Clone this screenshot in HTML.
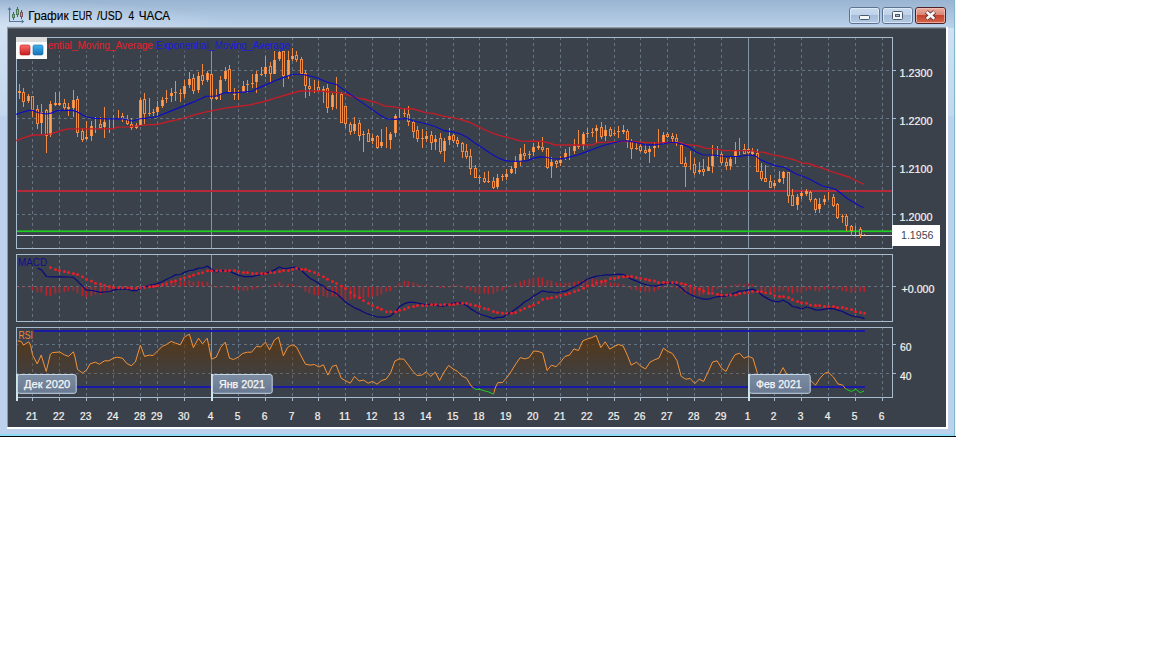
<!DOCTYPE html>
<html lang="ru"><head><meta charset="utf-8"><title>График EUR /USD 4 ЧАСА</title>
<style>
html,body{margin:0;padding:0;background:#fff;}
body{width:1152px;height:648px;overflow:hidden;position:relative;font-family:"Liberation Sans",sans-serif;}
svg{position:absolute;left:0;top:0;display:block;}
text{font-family:"Liberation Sans",sans-serif;}
.ax{font-size:11px;fill:#f2f2ee;stroke:#f2f2ee;stroke-width:0.22px;}
</style></head><body>
<svg width="1152" height="648" viewBox="0 0 1152 648">
<defs>
<radialGradient id="tg" cx="0" cy="1" r="1" fx="0" fy="1"><stop offset="0" stop-color="#dce8f6" stop-opacity="0.75"/><stop offset="0.45" stop-color="#dce8f6" stop-opacity="0.4"/><stop offset="1" stop-color="#dce8f6" stop-opacity="0"/></radialGradient>
<linearGradient id="sg" x1="0" y1="0" x2="0" y2="1"><stop offset="0" stop-color="#ffffff" stop-opacity="0.32"/><stop offset="1" stop-color="#ffffff" stop-opacity="0.12"/></linearGradient>
<linearGradient id="tb" x1="0" y1="0" x2="0" y2="1"><stop offset="0" stop-color="#99b4d1"/><stop offset="1" stop-color="#bad1ea"/></linearGradient>
<linearGradient id="rgu" x1="0" y1="328" x2="0" y2="386" gradientUnits="userSpaceOnUse"><stop offset="0" stop-color="#5e3406" stop-opacity="0.9"/><stop offset="0.5" stop-color="#5c3408" stop-opacity="0.45"/><stop offset="1" stop-color="#5a3408" stop-opacity="0"/></linearGradient>
<linearGradient id="bt" x1="0" y1="0" x2="0" y2="1"><stop offset="0" stop-color="#c9dbee"/><stop offset="0.48" stop-color="#bed2e9"/><stop offset="0.5" stop-color="#a6bdd9"/><stop offset="1" stop-color="#b4cae3"/></linearGradient>
<linearGradient id="bc" x1="0" y1="0" x2="0" y2="1"><stop offset="0" stop-color="#eab0a2"/><stop offset="0.48" stop-color="#d98472"/><stop offset="0.5" stop-color="#c6432c"/><stop offset="1" stop-color="#d4694c"/></linearGradient>
<linearGradient id="lr" x1="0" y1="0" x2="0" y2="1"><stop offset="0" stop-color="#ff6a6a"/><stop offset="1" stop-color="#c41c1c"/></linearGradient>
<linearGradient id="lb" x1="0" y1="0" x2="0" y2="1"><stop offset="0" stop-color="#3fb4ee"/><stop offset="1" stop-color="#1670b8"/></linearGradient>
<linearGradient id="ml" x1="0" y1="0" x2="0" y2="1"><stop offset="0" stop-color="#7b8ca3"/><stop offset="1" stop-color="#687991"/></linearGradient>
</defs>
<rect x="0" y="0" width="1152" height="648" fill="#ffffff"/>
<!-- window frame -->
<g shape-rendering="crispEdges">
<rect x="0" y="0" width="956" height="437" fill="#bcd2ec"/>
<rect x="0" y="0" width="956" height="28" fill="url(#tb)"/>
<rect x="0" y="0" width="240" height="28" fill="url(#tg)"/>
<rect x="0" y="28" width="7" height="88" fill="url(#sg)"/>
<rect x="948" y="28" width="6" height="88" fill="url(#sg)"/>
<rect x="0" y="434" width="956" height="2" fill="#8cdcf6"/>
<rect x="0" y="436" width="956" height="1" fill="#05080c"/>
<rect x="954" y="0" width="1" height="436" fill="#7fb6cc"/>
<rect x="955" y="0" width="1" height="436" fill="#dcfcff"/>
<rect x="7" y="27" width="941" height="402" fill="#ffffff"/>
<rect x="7" y="27" width="939" height="400" fill="#8e96a0"/>
<rect x="7" y="26" width="941" height="1" fill="#c3d5e8"/>
<rect x="8" y="29" width="938" height="398" fill="#3b414b"/>
<rect x="8" y="28" width="938" height="1" fill="#5c626b"/>
</g>
<g shape-rendering="crispEdges">
<line x1="32.5" y1="37" x2="32.5" y2="248" stroke="#667381" stroke-width="1" stroke-dasharray="3 3"/>
<line x1="59.5" y1="37" x2="59.5" y2="248" stroke="#667381" stroke-width="1" stroke-dasharray="3 3"/>
<line x1="86.5" y1="37" x2="86.5" y2="248" stroke="#667381" stroke-width="1" stroke-dasharray="3 3"/>
<line x1="113.5" y1="37" x2="113.5" y2="248" stroke="#667381" stroke-width="1" stroke-dasharray="3 3"/>
<line x1="140.5" y1="37" x2="140.5" y2="248" stroke="#667381" stroke-width="1" stroke-dasharray="3 3"/>
<line x1="157.5" y1="37" x2="157.5" y2="248" stroke="#667381" stroke-width="1" stroke-dasharray="3 3"/>
<line x1="184.5" y1="37" x2="184.5" y2="248" stroke="#667381" stroke-width="1" stroke-dasharray="3 3"/>
<rect x="211" y="38" width="1" height="210" fill="#8296aa"/>
<line x1="238.5" y1="37" x2="238.5" y2="248" stroke="#667381" stroke-width="1" stroke-dasharray="3 3"/>
<line x1="265.5" y1="37" x2="265.5" y2="248" stroke="#667381" stroke-width="1" stroke-dasharray="3 3"/>
<line x1="292.5" y1="37" x2="292.5" y2="248" stroke="#667381" stroke-width="1" stroke-dasharray="3 3"/>
<line x1="318.5" y1="37" x2="318.5" y2="248" stroke="#667381" stroke-width="1" stroke-dasharray="3 3"/>
<line x1="345.5" y1="37" x2="345.5" y2="248" stroke="#667381" stroke-width="1" stroke-dasharray="3 3"/>
<line x1="372.5" y1="37" x2="372.5" y2="248" stroke="#667381" stroke-width="1" stroke-dasharray="3 3"/>
<line x1="399.5" y1="37" x2="399.5" y2="248" stroke="#667381" stroke-width="1" stroke-dasharray="3 3"/>
<line x1="426.5" y1="37" x2="426.5" y2="248" stroke="#667381" stroke-width="1" stroke-dasharray="3 3"/>
<line x1="453.5" y1="37" x2="453.5" y2="248" stroke="#667381" stroke-width="1" stroke-dasharray="3 3"/>
<line x1="479.5" y1="37" x2="479.5" y2="248" stroke="#667381" stroke-width="1" stroke-dasharray="3 3"/>
<line x1="506.5" y1="37" x2="506.5" y2="248" stroke="#667381" stroke-width="1" stroke-dasharray="3 3"/>
<line x1="533.5" y1="37" x2="533.5" y2="248" stroke="#667381" stroke-width="1" stroke-dasharray="3 3"/>
<line x1="560.5" y1="37" x2="560.5" y2="248" stroke="#667381" stroke-width="1" stroke-dasharray="3 3"/>
<line x1="587.5" y1="37" x2="587.5" y2="248" stroke="#667381" stroke-width="1" stroke-dasharray="3 3"/>
<line x1="614.5" y1="37" x2="614.5" y2="248" stroke="#667381" stroke-width="1" stroke-dasharray="3 3"/>
<line x1="640.5" y1="37" x2="640.5" y2="248" stroke="#667381" stroke-width="1" stroke-dasharray="3 3"/>
<line x1="667.5" y1="37" x2="667.5" y2="248" stroke="#667381" stroke-width="1" stroke-dasharray="3 3"/>
<line x1="694.5" y1="37" x2="694.5" y2="248" stroke="#667381" stroke-width="1" stroke-dasharray="3 3"/>
<line x1="721.5" y1="37" x2="721.5" y2="248" stroke="#667381" stroke-width="1" stroke-dasharray="3 3"/>
<rect x="748" y="38" width="1" height="210" fill="#8296aa"/>
<line x1="774.5" y1="37" x2="774.5" y2="248" stroke="#667381" stroke-width="1" stroke-dasharray="3 3"/>
<line x1="801.5" y1="37" x2="801.5" y2="248" stroke="#667381" stroke-width="1" stroke-dasharray="3 3"/>
<line x1="828.5" y1="37" x2="828.5" y2="248" stroke="#667381" stroke-width="1" stroke-dasharray="3 3"/>
<line x1="855.5" y1="37" x2="855.5" y2="248" stroke="#667381" stroke-width="1" stroke-dasharray="3 3"/>
<line x1="882.5" y1="37" x2="882.5" y2="248" stroke="#667381" stroke-width="1" stroke-dasharray="3 3"/>
<line x1="32.5" y1="254" x2="32.5" y2="321" stroke="#667381" stroke-width="1" stroke-dasharray="3 3"/>
<line x1="59.5" y1="254" x2="59.5" y2="321" stroke="#667381" stroke-width="1" stroke-dasharray="3 3"/>
<line x1="86.5" y1="254" x2="86.5" y2="321" stroke="#667381" stroke-width="1" stroke-dasharray="3 3"/>
<line x1="113.5" y1="254" x2="113.5" y2="321" stroke="#667381" stroke-width="1" stroke-dasharray="3 3"/>
<line x1="140.5" y1="254" x2="140.5" y2="321" stroke="#667381" stroke-width="1" stroke-dasharray="3 3"/>
<line x1="157.5" y1="254" x2="157.5" y2="321" stroke="#667381" stroke-width="1" stroke-dasharray="3 3"/>
<line x1="184.5" y1="254" x2="184.5" y2="321" stroke="#667381" stroke-width="1" stroke-dasharray="3 3"/>
<rect x="211" y="255" width="1" height="66" fill="#8296aa"/>
<line x1="238.5" y1="254" x2="238.5" y2="321" stroke="#667381" stroke-width="1" stroke-dasharray="3 3"/>
<line x1="265.5" y1="254" x2="265.5" y2="321" stroke="#667381" stroke-width="1" stroke-dasharray="3 3"/>
<line x1="292.5" y1="254" x2="292.5" y2="321" stroke="#667381" stroke-width="1" stroke-dasharray="3 3"/>
<line x1="318.5" y1="254" x2="318.5" y2="321" stroke="#667381" stroke-width="1" stroke-dasharray="3 3"/>
<line x1="345.5" y1="254" x2="345.5" y2="321" stroke="#667381" stroke-width="1" stroke-dasharray="3 3"/>
<line x1="372.5" y1="254" x2="372.5" y2="321" stroke="#667381" stroke-width="1" stroke-dasharray="3 3"/>
<line x1="399.5" y1="254" x2="399.5" y2="321" stroke="#667381" stroke-width="1" stroke-dasharray="3 3"/>
<line x1="426.5" y1="254" x2="426.5" y2="321" stroke="#667381" stroke-width="1" stroke-dasharray="3 3"/>
<line x1="453.5" y1="254" x2="453.5" y2="321" stroke="#667381" stroke-width="1" stroke-dasharray="3 3"/>
<line x1="479.5" y1="254" x2="479.5" y2="321" stroke="#667381" stroke-width="1" stroke-dasharray="3 3"/>
<line x1="506.5" y1="254" x2="506.5" y2="321" stroke="#667381" stroke-width="1" stroke-dasharray="3 3"/>
<line x1="533.5" y1="254" x2="533.5" y2="321" stroke="#667381" stroke-width="1" stroke-dasharray="3 3"/>
<line x1="560.5" y1="254" x2="560.5" y2="321" stroke="#667381" stroke-width="1" stroke-dasharray="3 3"/>
<line x1="587.5" y1="254" x2="587.5" y2="321" stroke="#667381" stroke-width="1" stroke-dasharray="3 3"/>
<line x1="614.5" y1="254" x2="614.5" y2="321" stroke="#667381" stroke-width="1" stroke-dasharray="3 3"/>
<line x1="640.5" y1="254" x2="640.5" y2="321" stroke="#667381" stroke-width="1" stroke-dasharray="3 3"/>
<line x1="667.5" y1="254" x2="667.5" y2="321" stroke="#667381" stroke-width="1" stroke-dasharray="3 3"/>
<line x1="694.5" y1="254" x2="694.5" y2="321" stroke="#667381" stroke-width="1" stroke-dasharray="3 3"/>
<line x1="721.5" y1="254" x2="721.5" y2="321" stroke="#667381" stroke-width="1" stroke-dasharray="3 3"/>
<rect x="748" y="255" width="1" height="66" fill="#8296aa"/>
<line x1="774.5" y1="254" x2="774.5" y2="321" stroke="#667381" stroke-width="1" stroke-dasharray="3 3"/>
<line x1="801.5" y1="254" x2="801.5" y2="321" stroke="#667381" stroke-width="1" stroke-dasharray="3 3"/>
<line x1="828.5" y1="254" x2="828.5" y2="321" stroke="#667381" stroke-width="1" stroke-dasharray="3 3"/>
<line x1="855.5" y1="254" x2="855.5" y2="321" stroke="#667381" stroke-width="1" stroke-dasharray="3 3"/>
<line x1="882.5" y1="254" x2="882.5" y2="321" stroke="#667381" stroke-width="1" stroke-dasharray="3 3"/>
<line x1="32.5" y1="327" x2="32.5" y2="397" stroke="#667381" stroke-width="1" stroke-dasharray="3 3"/>
<line x1="59.5" y1="327" x2="59.5" y2="397" stroke="#667381" stroke-width="1" stroke-dasharray="3 3"/>
<line x1="86.5" y1="327" x2="86.5" y2="397" stroke="#667381" stroke-width="1" stroke-dasharray="3 3"/>
<line x1="113.5" y1="327" x2="113.5" y2="397" stroke="#667381" stroke-width="1" stroke-dasharray="3 3"/>
<line x1="140.5" y1="327" x2="140.5" y2="397" stroke="#667381" stroke-width="1" stroke-dasharray="3 3"/>
<line x1="157.5" y1="327" x2="157.5" y2="397" stroke="#667381" stroke-width="1" stroke-dasharray="3 3"/>
<line x1="184.5" y1="327" x2="184.5" y2="397" stroke="#667381" stroke-width="1" stroke-dasharray="3 3"/>
<rect x="211" y="328" width="1" height="69" fill="#8296aa"/>
<line x1="238.5" y1="327" x2="238.5" y2="397" stroke="#667381" stroke-width="1" stroke-dasharray="3 3"/>
<line x1="265.5" y1="327" x2="265.5" y2="397" stroke="#667381" stroke-width="1" stroke-dasharray="3 3"/>
<line x1="292.5" y1="327" x2="292.5" y2="397" stroke="#667381" stroke-width="1" stroke-dasharray="3 3"/>
<line x1="318.5" y1="327" x2="318.5" y2="397" stroke="#667381" stroke-width="1" stroke-dasharray="3 3"/>
<line x1="345.5" y1="327" x2="345.5" y2="397" stroke="#667381" stroke-width="1" stroke-dasharray="3 3"/>
<line x1="372.5" y1="327" x2="372.5" y2="397" stroke="#667381" stroke-width="1" stroke-dasharray="3 3"/>
<line x1="399.5" y1="327" x2="399.5" y2="397" stroke="#667381" stroke-width="1" stroke-dasharray="3 3"/>
<line x1="426.5" y1="327" x2="426.5" y2="397" stroke="#667381" stroke-width="1" stroke-dasharray="3 3"/>
<line x1="453.5" y1="327" x2="453.5" y2="397" stroke="#667381" stroke-width="1" stroke-dasharray="3 3"/>
<line x1="479.5" y1="327" x2="479.5" y2="397" stroke="#667381" stroke-width="1" stroke-dasharray="3 3"/>
<line x1="506.5" y1="327" x2="506.5" y2="397" stroke="#667381" stroke-width="1" stroke-dasharray="3 3"/>
<line x1="533.5" y1="327" x2="533.5" y2="397" stroke="#667381" stroke-width="1" stroke-dasharray="3 3"/>
<line x1="560.5" y1="327" x2="560.5" y2="397" stroke="#667381" stroke-width="1" stroke-dasharray="3 3"/>
<line x1="587.5" y1="327" x2="587.5" y2="397" stroke="#667381" stroke-width="1" stroke-dasharray="3 3"/>
<line x1="614.5" y1="327" x2="614.5" y2="397" stroke="#667381" stroke-width="1" stroke-dasharray="3 3"/>
<line x1="640.5" y1="327" x2="640.5" y2="397" stroke="#667381" stroke-width="1" stroke-dasharray="3 3"/>
<line x1="667.5" y1="327" x2="667.5" y2="397" stroke="#667381" stroke-width="1" stroke-dasharray="3 3"/>
<line x1="694.5" y1="327" x2="694.5" y2="397" stroke="#667381" stroke-width="1" stroke-dasharray="3 3"/>
<line x1="721.5" y1="327" x2="721.5" y2="397" stroke="#667381" stroke-width="1" stroke-dasharray="3 3"/>
<rect x="748" y="328" width="1" height="69" fill="#8296aa"/>
<line x1="774.5" y1="327" x2="774.5" y2="397" stroke="#667381" stroke-width="1" stroke-dasharray="3 3"/>
<line x1="801.5" y1="327" x2="801.5" y2="397" stroke="#667381" stroke-width="1" stroke-dasharray="3 3"/>
<line x1="828.5" y1="327" x2="828.5" y2="397" stroke="#667381" stroke-width="1" stroke-dasharray="3 3"/>
<line x1="855.5" y1="327" x2="855.5" y2="397" stroke="#667381" stroke-width="1" stroke-dasharray="3 3"/>
<line x1="882.5" y1="327" x2="882.5" y2="397" stroke="#667381" stroke-width="1" stroke-dasharray="3 3"/>
<line x1="16" y1="70.5" x2="892" y2="70.5" stroke="#667381" stroke-width="1" stroke-dasharray="3 3"/>
<line x1="16" y1="118.5" x2="892" y2="118.5" stroke="#667381" stroke-width="1" stroke-dasharray="3 3"/>
<line x1="16" y1="166.5" x2="892" y2="166.5" stroke="#667381" stroke-width="1" stroke-dasharray="3 3"/>
<line x1="16" y1="214.5" x2="892" y2="214.5" stroke="#667381" stroke-width="1" stroke-dasharray="3 3"/>
<line x1="16" y1="286.5" x2="892" y2="286.5" stroke="#667381" stroke-width="1" stroke-dasharray="3 3"/>
<line x1="16" y1="344.5" x2="892" y2="344.5" stroke="#667381" stroke-width="1" stroke-dasharray="3 3"/>
<line x1="16" y1="373.5" x2="892" y2="373.5" stroke="#667381" stroke-width="1" stroke-dasharray="3 3"/>
<rect x="16.5" y="37.5" width="876" height="211" fill="none" stroke="#a9bccf" stroke-width="1"/>
<rect x="16.5" y="254.5" width="876" height="67" fill="none" stroke="#a9bccf" stroke-width="1"/>
<rect x="16.5" y="327.5" width="876" height="70" fill="none" stroke="#a9bccf" stroke-width="1"/>
<rect x="893" y="70" width="3" height="1" fill="#a9bccf" />
<rect x="893" y="118" width="3" height="1" fill="#a9bccf" />
<rect x="893" y="166" width="3" height="1" fill="#a9bccf" />
<rect x="893" y="214" width="3" height="1" fill="#a9bccf" />
<rect x="893" y="286" width="3" height="1" fill="#a9bccf" />
<rect x="893" y="344" width="3" height="1" fill="#a9bccf" />
<rect x="893" y="373" width="3" height="1" fill="#a9bccf" />
<rect x="32" y="398" width="1" height="3" fill="#a9bccf" />
<rect x="59" y="398" width="1" height="3" fill="#a9bccf" />
<rect x="86" y="398" width="1" height="3" fill="#a9bccf" />
<rect x="113" y="398" width="1" height="3" fill="#a9bccf" />
<rect x="140" y="398" width="1" height="3" fill="#a9bccf" />
<rect x="157" y="398" width="1" height="3" fill="#a9bccf" />
<rect x="184" y="398" width="1" height="3" fill="#a9bccf" />
<rect x="211" y="398" width="1" height="3" fill="#a9bccf" />
<rect x="238" y="398" width="1" height="3" fill="#a9bccf" />
<rect x="265" y="398" width="1" height="3" fill="#a9bccf" />
<rect x="292" y="398" width="1" height="3" fill="#a9bccf" />
<rect x="318" y="398" width="1" height="3" fill="#a9bccf" />
<rect x="345" y="398" width="1" height="3" fill="#a9bccf" />
<rect x="372" y="398" width="1" height="3" fill="#a9bccf" />
<rect x="399" y="398" width="1" height="3" fill="#a9bccf" />
<rect x="426" y="398" width="1" height="3" fill="#a9bccf" />
<rect x="453" y="398" width="1" height="3" fill="#a9bccf" />
<rect x="479" y="398" width="1" height="3" fill="#a9bccf" />
<rect x="506" y="398" width="1" height="3" fill="#a9bccf" />
<rect x="533" y="398" width="1" height="3" fill="#a9bccf" />
<rect x="560" y="398" width="1" height="3" fill="#a9bccf" />
<rect x="587" y="398" width="1" height="3" fill="#a9bccf" />
<rect x="614" y="398" width="1" height="3" fill="#a9bccf" />
<rect x="640" y="398" width="1" height="3" fill="#a9bccf" />
<rect x="667" y="398" width="1" height="3" fill="#a9bccf" />
<rect x="694" y="398" width="1" height="3" fill="#a9bccf" />
<rect x="721" y="398" width="1" height="3" fill="#a9bccf" />
<rect x="748" y="398" width="1" height="3" fill="#a9bccf" />
<rect x="774" y="398" width="1" height="3" fill="#a9bccf" />
<rect x="801" y="398" width="1" height="3" fill="#a9bccf" />
<rect x="828" y="398" width="1" height="3" fill="#a9bccf" />
<rect x="855" y="398" width="1" height="3" fill="#a9bccf" />
<rect x="882" y="398" width="1" height="3" fill="#a9bccf" />
</g>
<defs><linearGradient id="rg" x1="0" y1="0" x2="0" y2="1"><stop offset="0" stop-color="#7a4510" stop-opacity="0.75"/><stop offset="0.55" stop-color="#7a4510" stop-opacity="0.42"/><stop offset="1" stop-color="#7a4510" stop-opacity="0"/></linearGradient><clipPath id="cg"><rect x="473" y="387.6" width="21" height="10"/><rect x="845" y="387.6" width="21" height="10"/></clipPath><clipPath id="co"><rect x="16" y="328" width="877" height="59.6"/><rect x="16" y="387.6" width="457" height="10"/><rect x="494" y="387.6" width="351" height="10"/></clipPath></defs>
<path d="M17.5,388 L17.5,340.8 L21.2,341.4 L23.5,345.1 L28.8,341.8 L30.6,345.1 L32.5,354.8 L37.2,363.9 L41.2,355.1 L46.2,371.4 L50.4,354.2 L52.5,352.6 L59.5,352.0 L64.4,354.8 L68.5,356.4 L73.4,351.8 L75.0,357.0 L77.5,369.5 L82.5,373.0 L86.5,370.1 L90.0,363.9 L95.4,362.2 L99.4,364.2 L104.6,360.8 L108.8,360.8 L113.4,358.2 L117.2,357.2 L122.5,358.2 L126.5,363.2 L131.2,365.8 L135.4,362.0 L140.4,345.1 L144.5,356.4 L149.4,355.1 L153.1,355.5 L157.5,351.0 L162.2,346.4 L166.5,344.5 L171.2,341.4 L175.4,343.2 L180.4,344.8 L184.4,337.0 L189.4,334.2 L193.4,347.6 L198.5,338.2 L202.5,343.9 L207.2,338.2 L211.5,359.2 L216.2,357.2 L220.6,347.6 L225.2,342.2 L229.5,358.2 L233.5,359.5 L238.5,357.0 L242.5,353.5 L247.5,352.2 L251.5,352.2 L256.5,346.4 L260.6,347.0 L265.4,342.2 L269.6,349.8 L274.4,340.1 L278.5,337.2 L283.4,355.8 L287.5,347.6 L290.0,345.8 L292.5,344.8 L296.5,347.0 L301.0,355.8 L305.5,364.2 L309.9,365.1 L314.4,364.5 L318.9,367.0 L323.4,364.8 L327.9,375.1 L332.2,366.4 L336.2,365.1 L341.2,378.2 L345.8,380.8 L350.2,383.2 L354.6,376.4 L359.1,381.0 L363.6,380.1 L368.1,383.2 L372.6,381.4 L377.0,384.2 L381.5,380.5 L386.0,379.2 L390.5,373.2 L394.9,361.0 L399.4,358.9 L403.9,359.2 L408.4,365.1 L412.9,371.4 L417.2,375.5 L421.8,375.1 L426.2,371.8 L430.8,376.4 L435.2,372.2 L439.6,380.5 L444.1,372.0 L448.6,365.5 L453.1,368.9 L457.6,371.4 L462.0,376.0 L466.5,378.2 L471.0,385.8 L473.1,387.6 L475.5,389.2 L480.0,389.5 L484.4,390.8 L488.9,392.0 L493.4,394.2 L495.6,387.0 L497.9,382.6 L502.4,382.6 L506.8,377.6 L511.2,371.4 L515.8,363.9 L520.2,357.6 L524.8,358.9 L529.1,357.6 L533.6,351.0 L538.1,351.4 L542.6,353.0 L547.1,370.5 L551.5,365.1 L556.0,366.8 L560.5,362.0 L565.0,356.4 L569.5,355.1 L573.9,348.9 L578.4,350.5 L582.9,340.8 L587.4,338.9 L591.9,337.6 L596.2,335.5 L600.8,347.6 L605.2,341.8 L609.8,349.2 L614.2,346.4 L618.6,344.5 L623.1,346.0 L627.6,355.8 L631.2,365.1 L636.5,362.2 L641.0,366.4 L645.5,368.9 L650.0,362.2 L654.5,359.8 L658.9,358.2 L663.4,348.2 L667.9,351.4 L672.4,353.5 L676.9,360.5 L681.2,376.4 L685.8,379.2 L690.2,378.5 L694.8,383.5 L699.2,379.2 L703.6,381.4 L708.1,372.0 L712.6,362.0 L717.1,360.8 L721.6,368.2 L726.0,371.4 L730.5,362.2 L735.0,354.8 L739.5,353.2 L744.0,358.2 L748.4,356.4 L752.9,358.2 L757.4,373.2 L761.9,380.8 L766.4,384.5 L770.8,380.8 L775.2,378.2 L780.0,373.2 L783.1,367.6 L786.2,373.2 L793.1,377.0 L797.6,379.5 L802.1,380.8 L806.6,377.0 L811.0,380.8 L815.5,385.1 L820.0,378.2 L824.5,373.5 L828.1,372.0 L833.4,377.0 L837.9,383.9 L842.4,385.1 L843.8,386.4 L845.0,388.2 L846.9,389.5 L851.4,391.4 L855.8,389.2 L860.2,392.6 L864.0,391.0 L864.0,388 Z" fill="url(#rgu)" />
<rect x="17" y="330" width="848" height="2" fill="#1a1aa8" />
<rect x="17" y="386" width="848" height="2" fill="#1a1aa8" />
<polyline points="17.5,340.8 21.2,341.4 23.5,345.1 28.8,341.8 30.6,345.1 32.5,354.8 37.2,363.9 41.2,355.1 46.2,371.4 50.4,354.2 52.5,352.6 59.5,352.0 64.4,354.8 68.5,356.4 73.4,351.8 75.0,357.0 77.5,369.5 82.5,373.0 86.5,370.1 90.0,363.9 95.4,362.2 99.4,364.2 104.6,360.8 108.8,360.8 113.4,358.2 117.2,357.2 122.5,358.2 126.5,363.2 131.2,365.8 135.4,362.0 140.4,345.1 144.5,356.4 149.4,355.1 153.1,355.5 157.5,351.0 162.2,346.4 166.5,344.5 171.2,341.4 175.4,343.2 180.4,344.8 184.4,337.0 189.4,334.2 193.4,347.6 198.5,338.2 202.5,343.9 207.2,338.2 211.5,359.2 216.2,357.2 220.6,347.6 225.2,342.2 229.5,358.2 233.5,359.5 238.5,357.0 242.5,353.5 247.5,352.2 251.5,352.2 256.5,346.4 260.6,347.0 265.4,342.2 269.6,349.8 274.4,340.1 278.5,337.2 283.4,355.8 287.5,347.6 290.0,345.8 292.5,344.8 296.5,347.0 301.0,355.8 305.5,364.2 309.9,365.1 314.4,364.5 318.9,367.0 323.4,364.8 327.9,375.1 332.2,366.4 336.2,365.1 341.2,378.2 345.8,380.8 350.2,383.2 354.6,376.4 359.1,381.0 363.6,380.1 368.1,383.2 372.6,381.4 377.0,384.2 381.5,380.5 386.0,379.2 390.5,373.2 394.9,361.0 399.4,358.9 403.9,359.2 408.4,365.1 412.9,371.4 417.2,375.5 421.8,375.1 426.2,371.8 430.8,376.4 435.2,372.2 439.6,380.5 444.1,372.0 448.6,365.5 453.1,368.9 457.6,371.4 462.0,376.0 466.5,378.2 471.0,385.8 473.1,387.6 475.5,389.2 480.0,389.5 484.4,390.8 488.9,392.0 493.4,394.2 495.6,387.0 497.9,382.6 502.4,382.6 506.8,377.6 511.2,371.4 515.8,363.9 520.2,357.6 524.8,358.9 529.1,357.6 533.6,351.0 538.1,351.4 542.6,353.0 547.1,370.5 551.5,365.1 556.0,366.8 560.5,362.0 565.0,356.4 569.5,355.1 573.9,348.9 578.4,350.5 582.9,340.8 587.4,338.9 591.9,337.6 596.2,335.5 600.8,347.6 605.2,341.8 609.8,349.2 614.2,346.4 618.6,344.5 623.1,346.0 627.6,355.8 631.2,365.1 636.5,362.2 641.0,366.4 645.5,368.9 650.0,362.2 654.5,359.8 658.9,358.2 663.4,348.2 667.9,351.4 672.4,353.5 676.9,360.5 681.2,376.4 685.8,379.2 690.2,378.5 694.8,383.5 699.2,379.2 703.6,381.4 708.1,372.0 712.6,362.0 717.1,360.8 721.6,368.2 726.0,371.4 730.5,362.2 735.0,354.8 739.5,353.2 744.0,358.2 748.4,356.4 752.9,358.2 757.4,373.2 761.9,380.8 766.4,384.5 770.8,380.8 775.2,378.2 780.0,373.2 783.1,367.6 786.2,373.2 793.1,377.0 797.6,379.5 802.1,380.8 806.6,377.0 811.0,380.8 815.5,385.1 820.0,378.2 824.5,373.5 828.1,372.0 833.4,377.0 837.9,383.9 842.4,385.1 843.8,386.4 845.0,388.2 846.9,389.5 851.4,391.4 855.8,389.2 860.2,392.6 864.0,391.0" fill="none" stroke="#f3933a" stroke-width="1.0" stroke-linejoin="round" clip-path="url(#co)"/>
<polyline points="17.5,340.8 21.2,341.4 23.5,345.1 28.8,341.8 30.6,345.1 32.5,354.8 37.2,363.9 41.2,355.1 46.2,371.4 50.4,354.2 52.5,352.6 59.5,352.0 64.4,354.8 68.5,356.4 73.4,351.8 75.0,357.0 77.5,369.5 82.5,373.0 86.5,370.1 90.0,363.9 95.4,362.2 99.4,364.2 104.6,360.8 108.8,360.8 113.4,358.2 117.2,357.2 122.5,358.2 126.5,363.2 131.2,365.8 135.4,362.0 140.4,345.1 144.5,356.4 149.4,355.1 153.1,355.5 157.5,351.0 162.2,346.4 166.5,344.5 171.2,341.4 175.4,343.2 180.4,344.8 184.4,337.0 189.4,334.2 193.4,347.6 198.5,338.2 202.5,343.9 207.2,338.2 211.5,359.2 216.2,357.2 220.6,347.6 225.2,342.2 229.5,358.2 233.5,359.5 238.5,357.0 242.5,353.5 247.5,352.2 251.5,352.2 256.5,346.4 260.6,347.0 265.4,342.2 269.6,349.8 274.4,340.1 278.5,337.2 283.4,355.8 287.5,347.6 290.0,345.8 292.5,344.8 296.5,347.0 301.0,355.8 305.5,364.2 309.9,365.1 314.4,364.5 318.9,367.0 323.4,364.8 327.9,375.1 332.2,366.4 336.2,365.1 341.2,378.2 345.8,380.8 350.2,383.2 354.6,376.4 359.1,381.0 363.6,380.1 368.1,383.2 372.6,381.4 377.0,384.2 381.5,380.5 386.0,379.2 390.5,373.2 394.9,361.0 399.4,358.9 403.9,359.2 408.4,365.1 412.9,371.4 417.2,375.5 421.8,375.1 426.2,371.8 430.8,376.4 435.2,372.2 439.6,380.5 444.1,372.0 448.6,365.5 453.1,368.9 457.6,371.4 462.0,376.0 466.5,378.2 471.0,385.8 473.1,387.6 475.5,389.2 480.0,389.5 484.4,390.8 488.9,392.0 493.4,394.2 495.6,387.0 497.9,382.6 502.4,382.6 506.8,377.6 511.2,371.4 515.8,363.9 520.2,357.6 524.8,358.9 529.1,357.6 533.6,351.0 538.1,351.4 542.6,353.0 547.1,370.5 551.5,365.1 556.0,366.8 560.5,362.0 565.0,356.4 569.5,355.1 573.9,348.9 578.4,350.5 582.9,340.8 587.4,338.9 591.9,337.6 596.2,335.5 600.8,347.6 605.2,341.8 609.8,349.2 614.2,346.4 618.6,344.5 623.1,346.0 627.6,355.8 631.2,365.1 636.5,362.2 641.0,366.4 645.5,368.9 650.0,362.2 654.5,359.8 658.9,358.2 663.4,348.2 667.9,351.4 672.4,353.5 676.9,360.5 681.2,376.4 685.8,379.2 690.2,378.5 694.8,383.5 699.2,379.2 703.6,381.4 708.1,372.0 712.6,362.0 717.1,360.8 721.6,368.2 726.0,371.4 730.5,362.2 735.0,354.8 739.5,353.2 744.0,358.2 748.4,356.4 752.9,358.2 757.4,373.2 761.9,380.8 766.4,384.5 770.8,380.8 775.2,378.2 780.0,373.2 783.1,367.6 786.2,373.2 793.1,377.0 797.6,379.5 802.1,380.8 806.6,377.0 811.0,380.8 815.5,385.1 820.0,378.2 824.5,373.5 828.1,372.0 833.4,377.0 837.9,383.9 842.4,385.1 843.8,386.4 845.0,388.2 846.9,389.5 851.4,391.4 855.8,389.2 860.2,392.6 864.0,391.0" fill="none" stroke="#22cc22" stroke-width="1.0" stroke-linejoin="round" clip-path="url(#cg)"/>
<rect x="18.5" y="286.6" width="1.7" height="0.8" fill="#b8232b"/>
<rect x="22.5" y="286.6" width="1.7" height="0.8" fill="#b8232b"/>
<rect x="27.5" y="286.6" width="1.7" height="0.8" fill="#b8232b"/>
<rect x="31.5" y="286.6" width="1.7" height="3.6" fill="#b8232b"/>
<rect x="36.5" y="286.6" width="1.7" height="6.0" fill="#b8232b"/>
<rect x="40.5" y="286.6" width="1.7" height="6.0" fill="#b8232b"/>
<rect x="45.5" y="286.6" width="1.7" height="9.2" fill="#b8232b"/>
<rect x="49.5" y="286.6" width="1.7" height="9.4" fill="#b8232b"/>
<rect x="54.5" y="286.6" width="1.7" height="7.2" fill="#b8232b"/>
<rect x="58.5" y="286.6" width="1.7" height="6.2" fill="#b8232b"/>
<rect x="63.5" y="286.6" width="1.7" height="5.4" fill="#b8232b"/>
<rect x="67.5" y="286.6" width="1.7" height="4.6" fill="#b8232b"/>
<rect x="72.5" y="286.6" width="1.7" height="3.8" fill="#b8232b"/>
<rect x="76.5" y="286.6" width="1.7" height="6.6" fill="#b8232b"/>
<rect x="81.5" y="286.6" width="1.7" height="9.4" fill="#b8232b"/>
<rect x="85.5" y="286.6" width="1.7" height="11.0" fill="#b8232b"/>
<rect x="90.5" y="286.6" width="1.7" height="9.4" fill="#b8232b"/>
<rect x="94.5" y="286.6" width="1.7" height="7.9" fill="#b8232b"/>
<rect x="99.5" y="286.6" width="1.7" height="8.1" fill="#b8232b"/>
<rect x="103.5" y="286.6" width="1.7" height="6.5" fill="#b8232b"/>
<rect x="108.5" y="286.6" width="1.7" height="5.0" fill="#b8232b"/>
<rect x="112.5" y="286.6" width="1.7" height="2.9" fill="#b8232b"/>
<rect x="117.5" y="286.6" width="1.7" height="1.5" fill="#b8232b"/>
<rect x="121.5" y="286.6" width="1.7" height="1.5" fill="#b8232b"/>
<rect x="126.5" y="286.6" width="1.7" height="1.5" fill="#b8232b"/>
<rect x="130.5" y="286.6" width="1.7" height="2.2" fill="#b8232b"/>
<rect x="135.5" y="286.6" width="1.7" height="2.2" fill="#b8232b"/>
<rect x="139.5" y="286.6" width="1.7" height="0.8" fill="#b8232b"/>
<rect x="143.5" y="286.6" width="1.7" height="0.8" fill="#b8232b"/>
<rect x="148.5" y="284.9" width="1.7" height="1.5" fill="#b8232b"/>
<rect x="152.5" y="284.4" width="1.7" height="2.0" fill="#b8232b"/>
<rect x="156.5" y="284.3" width="1.7" height="2.1" fill="#b8232b"/>
<rect x="161.5" y="283.0" width="1.7" height="3.4" fill="#b8232b"/>
<rect x="165.5" y="281.6" width="1.7" height="4.8" fill="#b8232b"/>
<rect x="170.5" y="281.6" width="1.7" height="4.8" fill="#b8232b"/>
<rect x="174.5" y="280.5" width="1.7" height="5.9" fill="#b8232b"/>
<rect x="179.5" y="281.6" width="1.7" height="4.8" fill="#b8232b"/>
<rect x="183.5" y="281.0" width="1.7" height="5.4" fill="#b8232b"/>
<rect x="188.5" y="280.4" width="1.7" height="6.0" fill="#b8232b"/>
<rect x="192.5" y="281.8" width="1.7" height="4.6" fill="#b8232b"/>
<rect x="197.5" y="281.0" width="1.7" height="5.4" fill="#b8232b"/>
<rect x="201.5" y="281.6" width="1.7" height="4.8" fill="#b8232b"/>
<rect x="206.5" y="281.8" width="1.7" height="4.6" fill="#b8232b"/>
<rect x="210.5" y="284.9" width="1.7" height="1.5" fill="#b8232b"/>
<rect x="215.5" y="286.6" width="1.7" height="1.2" fill="#b8232b"/>
<rect x="219.5" y="286.6" width="1.7" height="0.8" fill="#b8232b"/>
<rect x="224.5" y="285.6" width="1.7" height="0.8" fill="#b8232b"/>
<rect x="228.5" y="286.6" width="1.7" height="0.8" fill="#b8232b"/>
<rect x="233.5" y="286.6" width="1.7" height="3.1" fill="#b8232b"/>
<rect x="237.5" y="286.6" width="1.7" height="3.8" fill="#b8232b"/>
<rect x="242.5" y="286.6" width="1.7" height="4.1" fill="#b8232b"/>
<rect x="246.5" y="286.6" width="1.7" height="4.1" fill="#b8232b"/>
<rect x="251.5" y="286.6" width="1.7" height="2.9" fill="#b8232b"/>
<rect x="255.5" y="286.6" width="1.7" height="1.9" fill="#b8232b"/>
<rect x="260.5" y="286.6" width="1.7" height="0.9" fill="#b8232b"/>
<rect x="264.5" y="285.6" width="1.7" height="0.8" fill="#b8232b"/>
<rect x="269.5" y="285.6" width="1.7" height="0.8" fill="#b8232b"/>
<rect x="273.5" y="283.9" width="1.7" height="2.5" fill="#b8232b"/>
<rect x="278.5" y="281.9" width="1.7" height="4.5" fill="#b8232b"/>
<rect x="282.5" y="284.5" width="1.7" height="1.9" fill="#b8232b"/>
<rect x="287.5" y="284.1" width="1.7" height="2.2" fill="#b8232b"/>
<rect x="291.5" y="284.3" width="1.7" height="2.1" fill="#b8232b"/>
<rect x="295.5" y="285.5" width="1.7" height="0.9" fill="#b8232b"/>
<rect x="300.5" y="286.6" width="1.7" height="1.2" fill="#b8232b"/>
<rect x="304.5" y="286.6" width="1.7" height="4.8" fill="#b8232b"/>
<rect x="308.5" y="286.6" width="1.7" height="6.9" fill="#b8232b"/>
<rect x="313.5" y="286.6" width="1.7" height="8.4" fill="#b8232b"/>
<rect x="317.5" y="286.6" width="1.7" height="9.1" fill="#b8232b"/>
<rect x="322.5" y="286.6" width="1.7" height="9.4" fill="#b8232b"/>
<rect x="326.5" y="286.6" width="1.7" height="10.6" fill="#b8232b"/>
<rect x="331.5" y="286.6" width="1.7" height="10.0" fill="#b8232b"/>
<rect x="335.5" y="286.6" width="1.7" height="10.0" fill="#b8232b"/>
<rect x="340.5" y="286.6" width="1.7" height="11.9" fill="#b8232b"/>
<rect x="344.5" y="286.6" width="1.7" height="13.8" fill="#b8232b"/>
<rect x="349.5" y="286.6" width="1.7" height="12.9" fill="#b8232b"/>
<rect x="353.5" y="286.6" width="1.7" height="12.2" fill="#b8232b"/>
<rect x="358.5" y="286.6" width="1.7" height="12.1" fill="#b8232b"/>
<rect x="362.5" y="286.6" width="1.7" height="11.5" fill="#b8232b"/>
<rect x="367.5" y="286.6" width="1.7" height="11.0" fill="#b8232b"/>
<rect x="371.5" y="286.6" width="1.7" height="10.0" fill="#b8232b"/>
<rect x="376.5" y="286.6" width="1.7" height="9.6" fill="#b8232b"/>
<rect x="380.5" y="286.6" width="1.7" height="7.8" fill="#b8232b"/>
<rect x="385.5" y="286.6" width="1.7" height="5.2" fill="#b8232b"/>
<rect x="389.5" y="286.6" width="1.7" height="4.4" fill="#b8232b"/>
<rect x="394.5" y="286.6" width="1.7" height="0.8" fill="#b8232b"/>
<rect x="398.5" y="282.9" width="1.7" height="3.5" fill="#b8232b"/>
<rect x="403.5" y="280.8" width="1.7" height="5.6" fill="#b8232b"/>
<rect x="407.5" y="281.4" width="1.7" height="5.0" fill="#b8232b"/>
<rect x="412.5" y="282.3" width="1.7" height="4.1" fill="#b8232b"/>
<rect x="416.5" y="283.9" width="1.7" height="2.5" fill="#b8232b"/>
<rect x="421.5" y="285.1" width="1.7" height="1.2" fill="#b8232b"/>
<rect x="425.5" y="285.6" width="1.7" height="0.8" fill="#b8232b"/>
<rect x="430.5" y="285.6" width="1.7" height="0.8" fill="#b8232b"/>
<rect x="434.5" y="286.6" width="1.7" height="0.8" fill="#b8232b"/>
<rect x="439.5" y="286.6" width="1.7" height="1.6" fill="#b8232b"/>
<rect x="443.5" y="286.6" width="1.7" height="1.2" fill="#b8232b"/>
<rect x="448.5" y="286.6" width="1.7" height="0.8" fill="#b8232b"/>
<rect x="452.5" y="284.9" width="1.7" height="1.5" fill="#b8232b"/>
<rect x="456.5" y="285.1" width="1.7" height="1.2" fill="#b8232b"/>
<rect x="461.5" y="286.6" width="1.7" height="0.8" fill="#b8232b"/>
<rect x="465.5" y="286.6" width="1.7" height="2.2" fill="#b8232b"/>
<rect x="469.5" y="286.6" width="1.7" height="4.1" fill="#b8232b"/>
<rect x="474.5" y="286.6" width="1.7" height="6.2" fill="#b8232b"/>
<rect x="478.5" y="286.6" width="1.7" height="7.5" fill="#b8232b"/>
<rect x="483.5" y="286.6" width="1.7" height="6.9" fill="#b8232b"/>
<rect x="487.5" y="286.6" width="1.7" height="7.5" fill="#b8232b"/>
<rect x="492.5" y="286.6" width="1.7" height="7.1" fill="#b8232b"/>
<rect x="496.5" y="286.6" width="1.7" height="5.0" fill="#b8232b"/>
<rect x="501.5" y="286.6" width="1.7" height="4.1" fill="#b8232b"/>
<rect x="505.5" y="286.6" width="1.7" height="1.6" fill="#b8232b"/>
<rect x="510.5" y="285.1" width="1.7" height="1.2" fill="#b8232b"/>
<rect x="514.5" y="283.0" width="1.7" height="3.4" fill="#b8232b"/>
<rect x="519.5" y="281.6" width="1.7" height="4.8" fill="#b8232b"/>
<rect x="523.5" y="279.8" width="1.7" height="6.6" fill="#b8232b"/>
<rect x="528.5" y="279.1" width="1.7" height="7.2" fill="#b8232b"/>
<rect x="532.5" y="277.6" width="1.7" height="8.8" fill="#b8232b"/>
<rect x="537.5" y="277.3" width="1.7" height="9.1" fill="#b8232b"/>
<rect x="541.5" y="277.6" width="1.7" height="8.8" fill="#b8232b"/>
<rect x="546.5" y="279.8" width="1.7" height="6.6" fill="#b8232b"/>
<rect x="550.5" y="280.6" width="1.7" height="5.8" fill="#b8232b"/>
<rect x="555.5" y="282.6" width="1.7" height="3.8" fill="#b8232b"/>
<rect x="559.5" y="282.9" width="1.7" height="3.5" fill="#b8232b"/>
<rect x="564.5" y="283.0" width="1.7" height="3.4" fill="#b8232b"/>
<rect x="568.5" y="282.4" width="1.7" height="4.0" fill="#b8232b"/>
<rect x="573.5" y="281.9" width="1.7" height="4.5" fill="#b8232b"/>
<rect x="577.5" y="281.0" width="1.7" height="5.4" fill="#b8232b"/>
<rect x="582.5" y="279.9" width="1.7" height="6.5" fill="#b8232b"/>
<rect x="586.5" y="279.3" width="1.7" height="7.1" fill="#b8232b"/>
<rect x="591.5" y="278.5" width="1.7" height="7.9" fill="#b8232b"/>
<rect x="595.5" y="279.5" width="1.7" height="6.9" fill="#b8232b"/>
<rect x="600.5" y="280.1" width="1.7" height="6.2" fill="#b8232b"/>
<rect x="604.5" y="280.5" width="1.7" height="5.9" fill="#b8232b"/>
<rect x="609.5" y="282.6" width="1.7" height="3.8" fill="#b8232b"/>
<rect x="613.5" y="282.6" width="1.7" height="3.8" fill="#b8232b"/>
<rect x="617.5" y="283.3" width="1.7" height="3.1" fill="#b8232b"/>
<rect x="622.5" y="284.1" width="1.7" height="2.2" fill="#b8232b"/>
<rect x="626.5" y="286.6" width="1.7" height="0.8" fill="#b8232b"/>
<rect x="630.5" y="286.6" width="1.7" height="2.8" fill="#b8232b"/>
<rect x="635.5" y="286.6" width="1.7" height="3.8" fill="#b8232b"/>
<rect x="639.5" y="286.6" width="1.7" height="4.8" fill="#b8232b"/>
<rect x="644.5" y="286.6" width="1.7" height="5.2" fill="#b8232b"/>
<rect x="648.5" y="286.6" width="1.7" height="5.2" fill="#b8232b"/>
<rect x="653.5" y="286.6" width="1.7" height="5.0" fill="#b8232b"/>
<rect x="657.5" y="286.6" width="1.7" height="3.1" fill="#b8232b"/>
<rect x="662.5" y="286.6" width="1.7" height="1.9" fill="#b8232b"/>
<rect x="666.5" y="286.6" width="1.7" height="0.8" fill="#b8232b"/>
<rect x="671.5" y="286.6" width="1.7" height="0.8" fill="#b8232b"/>
<rect x="675.5" y="286.6" width="1.7" height="1.9" fill="#b8232b"/>
<rect x="680.5" y="286.6" width="1.7" height="4.4" fill="#b8232b"/>
<rect x="684.5" y="286.6" width="1.7" height="7.2" fill="#b8232b"/>
<rect x="689.5" y="286.6" width="1.7" height="8.4" fill="#b8232b"/>
<rect x="693.5" y="286.6" width="1.7" height="8.2" fill="#b8232b"/>
<rect x="698.5" y="286.6" width="1.7" height="9.0" fill="#b8232b"/>
<rect x="702.5" y="286.6" width="1.7" height="8.1" fill="#b8232b"/>
<rect x="707.5" y="286.6" width="1.7" height="6.0" fill="#b8232b"/>
<rect x="711.5" y="286.6" width="1.7" height="4.8" fill="#b8232b"/>
<rect x="716.5" y="286.6" width="1.7" height="2.2" fill="#b8232b"/>
<rect x="720.5" y="286.6" width="1.7" height="1.6" fill="#b8232b"/>
<rect x="725.5" y="286.6" width="1.7" height="1.2" fill="#b8232b"/>
<rect x="729.5" y="285.6" width="1.7" height="0.8" fill="#b8232b"/>
<rect x="734.5" y="284.3" width="1.7" height="2.1" fill="#b8232b"/>
<rect x="738.5" y="283.9" width="1.7" height="2.5" fill="#b8232b"/>
<rect x="743.5" y="284.4" width="1.7" height="2.0" fill="#b8232b"/>
<rect x="747.5" y="283.5" width="1.7" height="2.9" fill="#b8232b"/>
<rect x="751.5" y="284.1" width="1.7" height="2.2" fill="#b8232b"/>
<rect x="756.5" y="285.6" width="1.7" height="0.8" fill="#b8232b"/>
<rect x="760.5" y="286.6" width="1.7" height="3.4" fill="#b8232b"/>
<rect x="764.5" y="286.6" width="1.7" height="4.6" fill="#b8232b"/>
<rect x="769.5" y="286.6" width="1.7" height="7.0" fill="#b8232b"/>
<rect x="773.5" y="286.6" width="1.7" height="6.0" fill="#b8232b"/>
<rect x="778.5" y="286.6" width="1.7" height="5.0" fill="#b8232b"/>
<rect x="782.5" y="286.6" width="1.7" height="3.8" fill="#b8232b"/>
<rect x="787.5" y="286.6" width="1.7" height="5.6" fill="#b8232b"/>
<rect x="791.5" y="286.6" width="1.7" height="7.0" fill="#b8232b"/>
<rect x="796.5" y="286.6" width="1.7" height="5.9" fill="#b8232b"/>
<rect x="800.5" y="286.6" width="1.7" height="6.2" fill="#b8232b"/>
<rect x="805.5" y="286.6" width="1.7" height="3.8" fill="#b8232b"/>
<rect x="809.5" y="286.6" width="1.7" height="3.1" fill="#b8232b"/>
<rect x="814.5" y="286.6" width="1.7" height="4.4" fill="#b8232b"/>
<rect x="818.5" y="286.6" width="1.7" height="4.8" fill="#b8232b"/>
<rect x="823.5" y="286.6" width="1.7" height="2.8" fill="#b8232b"/>
<rect x="827.5" y="286.6" width="1.7" height="2.1" fill="#b8232b"/>
<rect x="832.5" y="286.6" width="1.7" height="2.1" fill="#b8232b"/>
<rect x="836.5" y="286.6" width="1.7" height="2.9" fill="#b8232b"/>
<rect x="841.5" y="286.6" width="1.7" height="4.1" fill="#b8232b"/>
<rect x="845.5" y="286.6" width="1.7" height="5.0" fill="#b8232b"/>
<rect x="850.5" y="286.6" width="1.7" height="6.2" fill="#b8232b"/>
<rect x="854.5" y="286.6" width="1.7" height="4.8" fill="#b8232b"/>
<rect x="859.5" y="286.6" width="1.7" height="5.0" fill="#b8232b"/>
<rect x="863.5" y="286.6" width="1.7" height="5.4" fill="#b8232b"/>
<polyline points="37.5,268.0 41.5,269.9 46.5,276.5 50.5,276.8 55.5,276.8 59.5,276.8 64.5,276.9 68.5,277.0 73.5,277.4 77.5,281.1 82.5,286.1 86.5,290.2 91.5,290.5 95.5,291.1 100.5,292.4 104.5,291.8 109.5,291.5 113.5,290.2 118.5,289.2 122.5,289.2 127.5,289.2 131.5,290.5 136.5,290.5 140.5,288.2 144.5,287.4 149.5,285.2 153.5,284.5 157.5,283.6 162.5,281.5 166.5,279.2 171.5,277.0 175.5,274.9 180.5,274.5 184.5,272.4 189.5,270.5 193.5,270.2 198.5,268.2 202.5,268.0 207.5,266.1 211.5,269.2 216.5,272.0 220.5,270.8 225.5,270.5 229.5,271.1 234.5,273.6 238.5,275.2 243.5,276.5 247.5,276.5 252.5,276.5 256.5,275.5 261.5,274.5 265.5,273.0 270.5,271.8 274.5,269.9 279.5,267.0 283.5,268.6 288.5,268.2 292.5,267.4 296.5,267.4 301.5,270.5 305.5,274.2 309.5,278.0 314.5,280.8 318.5,283.6 323.5,286.1 327.5,289.9 332.5,291.5 336.5,293.6 341.5,298.0 345.5,302.4 350.5,305.2 354.5,307.8 359.5,309.9 363.5,312.0 368.5,314.2 372.5,315.5 377.5,317.0 381.5,317.0 386.5,317.0 390.5,316.1 395.5,311.8 399.5,306.8 404.5,303.6 408.5,302.4 413.5,302.4 417.5,303.0 422.5,304.2 426.5,304.9 431.5,304.0 435.5,304.9 440.5,306.5 444.5,305.8 449.5,304.5 453.5,303.0 457.5,302.4 462.5,303.6 466.5,305.5 470.5,308.6 475.5,311.8 479.5,314.0 484.5,315.5 488.5,316.8 493.5,318.6 497.5,317.4 502.5,317.4 506.5,314.9 511.5,312.0 515.5,309.0 520.5,305.5 524.5,302.0 529.5,299.2 533.5,296.1 538.5,293.2 542.5,290.8 547.5,292.0 551.5,292.0 556.5,293.0 560.5,292.0 565.5,291.1 569.5,289.2 574.5,287.0 578.5,284.9 583.5,281.8 587.5,279.0 592.5,277.4 596.5,276.1 601.5,275.5 605.5,274.9 610.5,274.9 614.5,274.5 618.5,274.2 623.5,274.5 627.5,277.0 631.5,279.2 636.5,281.1 640.5,283.0 645.5,284.5 649.5,285.5 654.5,286.1 658.5,285.5 663.5,284.2 667.5,283.0 672.5,283.0 676.5,284.2 681.5,288.0 685.5,291.8 690.5,294.5 694.5,296.5 699.5,298.0 703.5,299.2 708.5,299.2 712.5,298.0 717.5,296.5 721.5,296.5 726.5,296.1 730.5,294.5 735.5,292.8 739.5,291.1 744.5,290.8 748.5,289.9 752.5,289.2 757.5,291.1 761.5,294.9 765.5,297.4 770.5,300.2 774.5,301.5 779.5,301.5 783.5,300.2 788.5,303.0 792.5,306.5 797.5,307.4 801.5,309.0 806.5,307.0 810.5,308.0 815.5,309.9 819.5,310.2 824.5,309.2 828.5,308.6 833.5,308.6 837.5,310.2 842.5,311.5 846.5,313.6 851.5,315.8 855.5,316.5 860.5,317.4 864.5,318.6" fill="none" stroke="#0a0a7e" stroke-width="1.25" stroke-linejoin="round"/>
<circle cx="50.5" cy="267.4" r="1.5" fill="#e6202a"/>
<circle cx="55.5" cy="269.5" r="1.5" fill="#e6202a"/>
<circle cx="59.5" cy="270.5" r="1.5" fill="#e6202a"/>
<circle cx="64.5" cy="271.5" r="1.5" fill="#e6202a"/>
<circle cx="68.5" cy="272.4" r="1.5" fill="#e6202a"/>
<circle cx="73.5" cy="273.6" r="1.5" fill="#e6202a"/>
<circle cx="77.5" cy="274.5" r="1.5" fill="#e6202a"/>
<circle cx="82.5" cy="276.8" r="1.5" fill="#e6202a"/>
<circle cx="86.5" cy="279.2" r="1.5" fill="#e6202a"/>
<circle cx="91.5" cy="281.1" r="1.5" fill="#e6202a"/>
<circle cx="95.5" cy="283.2" r="1.5" fill="#e6202a"/>
<circle cx="100.5" cy="284.2" r="1.5" fill="#e6202a"/>
<circle cx="104.5" cy="285.2" r="1.5" fill="#e6202a"/>
<circle cx="109.5" cy="286.5" r="1.5" fill="#e6202a"/>
<circle cx="113.5" cy="287.4" r="1.5" fill="#e6202a"/>
<circle cx="118.5" cy="287.8" r="1.5" fill="#e6202a"/>
<circle cx="122.5" cy="287.8" r="1.5" fill="#e6202a"/>
<circle cx="127.5" cy="287.8" r="1.5" fill="#e6202a"/>
<circle cx="131.5" cy="288.2" r="1.5" fill="#e6202a"/>
<circle cx="136.5" cy="288.2" r="1.5" fill="#e6202a"/>
<circle cx="140.5" cy="287.8" r="1.5" fill="#e6202a"/>
<circle cx="144.5" cy="287.4" r="1.5" fill="#e6202a"/>
<circle cx="149.5" cy="286.8" r="1.5" fill="#e6202a"/>
<circle cx="153.5" cy="286.5" r="1.5" fill="#e6202a"/>
<circle cx="157.5" cy="285.8" r="1.5" fill="#e6202a"/>
<circle cx="162.5" cy="284.9" r="1.5" fill="#e6202a"/>
<circle cx="166.5" cy="284.0" r="1.5" fill="#e6202a"/>
<circle cx="171.5" cy="281.8" r="1.5" fill="#e6202a"/>
<circle cx="175.5" cy="280.8" r="1.5" fill="#e6202a"/>
<circle cx="180.5" cy="279.2" r="1.5" fill="#e6202a"/>
<circle cx="184.5" cy="277.8" r="1.5" fill="#e6202a"/>
<circle cx="189.5" cy="276.5" r="1.5" fill="#e6202a"/>
<circle cx="193.5" cy="274.9" r="1.5" fill="#e6202a"/>
<circle cx="198.5" cy="273.6" r="1.5" fill="#e6202a"/>
<circle cx="202.5" cy="272.8" r="1.5" fill="#e6202a"/>
<circle cx="207.5" cy="270.8" r="1.5" fill="#e6202a"/>
<circle cx="211.5" cy="270.8" r="1.5" fill="#e6202a"/>
<circle cx="216.5" cy="270.8" r="1.5" fill="#e6202a"/>
<circle cx="220.5" cy="270.8" r="1.5" fill="#e6202a"/>
<circle cx="225.5" cy="270.8" r="1.5" fill="#e6202a"/>
<circle cx="229.5" cy="270.5" r="1.5" fill="#e6202a"/>
<circle cx="234.5" cy="270.5" r="1.5" fill="#e6202a"/>
<circle cx="238.5" cy="271.5" r="1.5" fill="#e6202a"/>
<circle cx="243.5" cy="272.4" r="1.5" fill="#e6202a"/>
<circle cx="247.5" cy="272.4" r="1.5" fill="#e6202a"/>
<circle cx="252.5" cy="273.6" r="1.5" fill="#e6202a"/>
<circle cx="256.5" cy="273.6" r="1.5" fill="#e6202a"/>
<circle cx="261.5" cy="273.6" r="1.5" fill="#e6202a"/>
<circle cx="265.5" cy="273.6" r="1.5" fill="#e6202a"/>
<circle cx="270.5" cy="272.4" r="1.5" fill="#e6202a"/>
<circle cx="274.5" cy="272.4" r="1.5" fill="#e6202a"/>
<circle cx="279.5" cy="271.5" r="1.5" fill="#e6202a"/>
<circle cx="283.5" cy="270.5" r="1.5" fill="#e6202a"/>
<circle cx="288.5" cy="270.5" r="1.5" fill="#e6202a"/>
<circle cx="292.5" cy="269.5" r="1.5" fill="#e6202a"/>
<circle cx="296.5" cy="268.2" r="1.5" fill="#e6202a"/>
<circle cx="301.5" cy="269.2" r="1.5" fill="#e6202a"/>
<circle cx="305.5" cy="269.5" r="1.5" fill="#e6202a"/>
<circle cx="309.5" cy="271.1" r="1.5" fill="#e6202a"/>
<circle cx="314.5" cy="272.4" r="1.5" fill="#e6202a"/>
<circle cx="318.5" cy="274.5" r="1.5" fill="#e6202a"/>
<circle cx="323.5" cy="276.8" r="1.5" fill="#e6202a"/>
<circle cx="327.5" cy="279.2" r="1.5" fill="#e6202a"/>
<circle cx="332.5" cy="281.5" r="1.5" fill="#e6202a"/>
<circle cx="336.5" cy="283.6" r="1.5" fill="#e6202a"/>
<circle cx="341.5" cy="286.1" r="1.5" fill="#e6202a"/>
<circle cx="345.5" cy="288.6" r="1.5" fill="#e6202a"/>
<circle cx="350.5" cy="292.4" r="1.5" fill="#e6202a"/>
<circle cx="354.5" cy="295.5" r="1.5" fill="#e6202a"/>
<circle cx="359.5" cy="297.8" r="1.5" fill="#e6202a"/>
<circle cx="363.5" cy="300.5" r="1.5" fill="#e6202a"/>
<circle cx="368.5" cy="303.2" r="1.5" fill="#e6202a"/>
<circle cx="372.5" cy="305.5" r="1.5" fill="#e6202a"/>
<circle cx="377.5" cy="307.4" r="1.5" fill="#e6202a"/>
<circle cx="381.5" cy="309.2" r="1.5" fill="#e6202a"/>
<circle cx="386.5" cy="311.8" r="1.5" fill="#e6202a"/>
<circle cx="390.5" cy="311.8" r="1.5" fill="#e6202a"/>
<circle cx="395.5" cy="311.8" r="1.5" fill="#e6202a"/>
<circle cx="399.5" cy="310.2" r="1.5" fill="#e6202a"/>
<circle cx="404.5" cy="309.2" r="1.5" fill="#e6202a"/>
<circle cx="408.5" cy="307.4" r="1.5" fill="#e6202a"/>
<circle cx="413.5" cy="306.5" r="1.5" fill="#e6202a"/>
<circle cx="417.5" cy="305.5" r="1.5" fill="#e6202a"/>
<circle cx="422.5" cy="305.5" r="1.5" fill="#e6202a"/>
<circle cx="426.5" cy="305.5" r="1.5" fill="#e6202a"/>
<circle cx="431.5" cy="304.5" r="1.5" fill="#e6202a"/>
<circle cx="435.5" cy="304.5" r="1.5" fill="#e6202a"/>
<circle cx="440.5" cy="304.9" r="1.5" fill="#e6202a"/>
<circle cx="444.5" cy="304.5" r="1.5" fill="#e6202a"/>
<circle cx="449.5" cy="304.5" r="1.5" fill="#e6202a"/>
<circle cx="453.5" cy="304.5" r="1.5" fill="#e6202a"/>
<circle cx="457.5" cy="303.6" r="1.5" fill="#e6202a"/>
<circle cx="462.5" cy="303.2" r="1.5" fill="#e6202a"/>
<circle cx="466.5" cy="303.2" r="1.5" fill="#e6202a"/>
<circle cx="470.5" cy="304.5" r="1.5" fill="#e6202a"/>
<circle cx="475.5" cy="305.5" r="1.5" fill="#e6202a"/>
<circle cx="479.5" cy="306.5" r="1.5" fill="#e6202a"/>
<circle cx="484.5" cy="308.6" r="1.5" fill="#e6202a"/>
<circle cx="488.5" cy="309.2" r="1.5" fill="#e6202a"/>
<circle cx="493.5" cy="311.5" r="1.5" fill="#e6202a"/>
<circle cx="497.5" cy="312.4" r="1.5" fill="#e6202a"/>
<circle cx="502.5" cy="313.2" r="1.5" fill="#e6202a"/>
<circle cx="506.5" cy="313.2" r="1.5" fill="#e6202a"/>
<circle cx="511.5" cy="313.2" r="1.5" fill="#e6202a"/>
<circle cx="515.5" cy="312.4" r="1.5" fill="#e6202a"/>
<circle cx="520.5" cy="310.2" r="1.5" fill="#e6202a"/>
<circle cx="524.5" cy="308.6" r="1.5" fill="#e6202a"/>
<circle cx="529.5" cy="306.5" r="1.5" fill="#e6202a"/>
<circle cx="533.5" cy="304.9" r="1.5" fill="#e6202a"/>
<circle cx="538.5" cy="302.4" r="1.5" fill="#e6202a"/>
<circle cx="542.5" cy="299.5" r="1.5" fill="#e6202a"/>
<circle cx="547.5" cy="298.6" r="1.5" fill="#e6202a"/>
<circle cx="551.5" cy="297.8" r="1.5" fill="#e6202a"/>
<circle cx="556.5" cy="296.8" r="1.5" fill="#e6202a"/>
<circle cx="560.5" cy="295.5" r="1.5" fill="#e6202a"/>
<circle cx="565.5" cy="294.5" r="1.5" fill="#e6202a"/>
<circle cx="569.5" cy="293.2" r="1.5" fill="#e6202a"/>
<circle cx="574.5" cy="291.5" r="1.5" fill="#e6202a"/>
<circle cx="578.5" cy="290.2" r="1.5" fill="#e6202a"/>
<circle cx="583.5" cy="288.2" r="1.5" fill="#e6202a"/>
<circle cx="587.5" cy="286.1" r="1.5" fill="#e6202a"/>
<circle cx="592.5" cy="285.2" r="1.5" fill="#e6202a"/>
<circle cx="596.5" cy="283.0" r="1.5" fill="#e6202a"/>
<circle cx="601.5" cy="281.8" r="1.5" fill="#e6202a"/>
<circle cx="605.5" cy="280.8" r="1.5" fill="#e6202a"/>
<circle cx="610.5" cy="278.6" r="1.5" fill="#e6202a"/>
<circle cx="614.5" cy="278.2" r="1.5" fill="#e6202a"/>
<circle cx="618.5" cy="277.4" r="1.5" fill="#e6202a"/>
<circle cx="623.5" cy="276.8" r="1.5" fill="#e6202a"/>
<circle cx="627.5" cy="276.5" r="1.5" fill="#e6202a"/>
<circle cx="631.5" cy="276.5" r="1.5" fill="#e6202a"/>
<circle cx="636.5" cy="277.4" r="1.5" fill="#e6202a"/>
<circle cx="640.5" cy="278.2" r="1.5" fill="#e6202a"/>
<circle cx="645.5" cy="279.2" r="1.5" fill="#e6202a"/>
<circle cx="649.5" cy="280.2" r="1.5" fill="#e6202a"/>
<circle cx="654.5" cy="281.1" r="1.5" fill="#e6202a"/>
<circle cx="658.5" cy="282.4" r="1.5" fill="#e6202a"/>
<circle cx="663.5" cy="282.4" r="1.5" fill="#e6202a"/>
<circle cx="667.5" cy="282.4" r="1.5" fill="#e6202a"/>
<circle cx="672.5" cy="282.4" r="1.5" fill="#e6202a"/>
<circle cx="676.5" cy="282.4" r="1.5" fill="#e6202a"/>
<circle cx="681.5" cy="283.6" r="1.5" fill="#e6202a"/>
<circle cx="685.5" cy="284.5" r="1.5" fill="#e6202a"/>
<circle cx="690.5" cy="286.1" r="1.5" fill="#e6202a"/>
<circle cx="694.5" cy="288.2" r="1.5" fill="#e6202a"/>
<circle cx="699.5" cy="289.0" r="1.5" fill="#e6202a"/>
<circle cx="703.5" cy="291.1" r="1.5" fill="#e6202a"/>
<circle cx="708.5" cy="293.2" r="1.5" fill="#e6202a"/>
<circle cx="712.5" cy="293.2" r="1.5" fill="#e6202a"/>
<circle cx="717.5" cy="294.2" r="1.5" fill="#e6202a"/>
<circle cx="721.5" cy="294.9" r="1.5" fill="#e6202a"/>
<circle cx="726.5" cy="294.9" r="1.5" fill="#e6202a"/>
<circle cx="730.5" cy="294.9" r="1.5" fill="#e6202a"/>
<circle cx="735.5" cy="294.9" r="1.5" fill="#e6202a"/>
<circle cx="739.5" cy="293.6" r="1.5" fill="#e6202a"/>
<circle cx="744.5" cy="292.8" r="1.5" fill="#e6202a"/>
<circle cx="748.5" cy="292.8" r="1.5" fill="#e6202a"/>
<circle cx="752.5" cy="291.5" r="1.5" fill="#e6202a"/>
<circle cx="757.5" cy="291.5" r="1.5" fill="#e6202a"/>
<circle cx="761.5" cy="291.5" r="1.5" fill="#e6202a"/>
<circle cx="765.5" cy="292.8" r="1.5" fill="#e6202a"/>
<circle cx="770.5" cy="293.2" r="1.5" fill="#e6202a"/>
<circle cx="774.5" cy="295.5" r="1.5" fill="#e6202a"/>
<circle cx="779.5" cy="296.5" r="1.5" fill="#e6202a"/>
<circle cx="783.5" cy="296.5" r="1.5" fill="#e6202a"/>
<circle cx="788.5" cy="297.4" r="1.5" fill="#e6202a"/>
<circle cx="792.5" cy="299.5" r="1.5" fill="#e6202a"/>
<circle cx="797.5" cy="301.5" r="1.5" fill="#e6202a"/>
<circle cx="801.5" cy="302.8" r="1.5" fill="#e6202a"/>
<circle cx="806.5" cy="303.2" r="1.5" fill="#e6202a"/>
<circle cx="810.5" cy="304.9" r="1.5" fill="#e6202a"/>
<circle cx="815.5" cy="305.5" r="1.5" fill="#e6202a"/>
<circle cx="819.5" cy="305.5" r="1.5" fill="#e6202a"/>
<circle cx="824.5" cy="306.5" r="1.5" fill="#e6202a"/>
<circle cx="828.5" cy="306.5" r="1.5" fill="#e6202a"/>
<circle cx="833.5" cy="306.5" r="1.5" fill="#e6202a"/>
<circle cx="837.5" cy="307.4" r="1.5" fill="#e6202a"/>
<circle cx="842.5" cy="307.4" r="1.5" fill="#e6202a"/>
<circle cx="846.5" cy="308.6" r="1.5" fill="#e6202a"/>
<circle cx="851.5" cy="309.5" r="1.5" fill="#e6202a"/>
<circle cx="855.5" cy="311.8" r="1.5" fill="#e6202a"/>
<circle cx="860.5" cy="312.4" r="1.5" fill="#e6202a"/>
<circle cx="864.5" cy="313.2" r="1.5" fill="#e6202a"/>
<rect x="17" y="190" width="875" height="2" fill="#b62a3a" shape-rendering="crispEdges"/>
<rect x="17" y="230.4" width="875" height="1.7" fill="#20d020" />
<rect x="17" y="235" width="875" height="1" fill="#d2dae2" shape-rendering="crispEdges"/>
<g shape-rendering="crispEdges">
<rect x="19" y="84" width="1" height="15" fill="#f18a42" />
<rect x="18" y="91" width="3" height="2" fill="#f18a42" />
<rect x="19" y="91" width="1" height="2" fill="#ffa258" />
<rect x="23" y="88" width="1" height="19" fill="#f18a42" />
<rect x="22" y="92" width="3" height="10" fill="#f18a42" />
<rect x="23" y="93" width="1" height="8" fill="#5e3a24" />
<rect x="28" y="94" width="1" height="9" fill="#f18a42" />
<rect x="27" y="96" width="3" height="5" fill="#f18a42" />
<rect x="28" y="96" width="1" height="5" fill="#ffa258" />
<rect x="32" y="96" width="1" height="21" fill="#f18a42" />
<rect x="31" y="96" width="3" height="14" fill="#f18a42" />
<rect x="32" y="97" width="1" height="12" fill="#5e3a24" />
<rect x="37" y="105" width="1" height="24" fill="#f18a42" />
<rect x="36" y="109" width="3" height="15" fill="#f18a42" />
<rect x="37" y="110" width="1" height="13" fill="#5e3a24" />
<rect x="41" y="104" width="1" height="30" fill="#f18a42" />
<rect x="40" y="112" width="3" height="11" fill="#f18a42" />
<rect x="41" y="112" width="1" height="11" fill="#ffa258" />
<rect x="46" y="109" width="1" height="44" fill="#f18a42" />
<rect x="45" y="110" width="3" height="26" fill="#f18a42" />
<rect x="46" y="111" width="1" height="24" fill="#5e3a24" />
<rect x="50" y="101" width="1" height="36" fill="#f18a42" />
<rect x="49" y="104" width="3" height="31" fill="#f18a42" />
<rect x="50" y="104" width="1" height="31" fill="#ffa258" />
<rect x="55" y="92" width="1" height="14" fill="#f18a42" />
<rect x="54" y="103" width="3" height="2" fill="#f18a42" />
<rect x="55" y="103" width="1" height="2" fill="#ffa258" />
<rect x="59" y="92" width="1" height="14" fill="#f18a42" />
<rect x="58" y="103" width="3" height="2" fill="#f18a42" />
<rect x="59" y="103" width="1" height="2" fill="#ffa258" />
<rect x="64" y="99" width="1" height="11" fill="#f18a42" />
<rect x="63" y="103" width="3" height="5" fill="#f18a42" />
<rect x="64" y="104" width="1" height="3" fill="#5e3a24" />
<rect x="68" y="103" width="1" height="13" fill="#f18a42" />
<rect x="67" y="107" width="3" height="2" fill="#f18a42" />
<rect x="68" y="107" width="1" height="2" fill="#ffa258" />
<rect x="73" y="90" width="1" height="27" fill="#f18a42" />
<rect x="72" y="100" width="3" height="8" fill="#f18a42" />
<rect x="73" y="100" width="1" height="8" fill="#ffa258" />
<rect x="77" y="96" width="1" height="41" fill="#f18a42" />
<rect x="76" y="99" width="3" height="34" fill="#f18a42" />
<rect x="77" y="100" width="1" height="32" fill="#5e3a24" />
<rect x="82" y="128" width="1" height="14" fill="#f18a42" />
<rect x="81" y="131" width="3" height="9" fill="#f18a42" />
<rect x="82" y="132" width="1" height="7" fill="#5e3a24" />
<rect x="86" y="121" width="1" height="19" fill="#f18a42" />
<rect x="85" y="137" width="3" height="2" fill="#f18a42" />
<rect x="86" y="137" width="1" height="2" fill="#ffa258" />
<rect x="91" y="121" width="1" height="20" fill="#f18a42" />
<rect x="90" y="126" width="3" height="10" fill="#f18a42" />
<rect x="91" y="126" width="1" height="10" fill="#ffa258" />
<rect x="95" y="117" width="1" height="16" fill="#f18a42" />
<rect x="100" y="117" width="1" height="12" fill="#f18a42" />
<rect x="99" y="124" width="3" height="4" fill="#f18a42" />
<rect x="100" y="125" width="1" height="2" fill="#5e3a24" />
<rect x="104" y="107" width="1" height="31" fill="#f18a42" />
<rect x="103" y="122" width="3" height="5" fill="#f18a42" />
<rect x="104" y="122" width="1" height="5" fill="#ffa258" />
<rect x="109" y="118" width="1" height="15" fill="#f18a42" />
<rect x="113" y="115" width="1" height="14" fill="#f18a42" />
<rect x="118" y="110" width="1" height="8" fill="#f18a42" />
<rect x="122" y="113" width="1" height="9" fill="#f18a42" />
<rect x="121" y="116" width="3" height="3" fill="#f18a42" />
<rect x="122" y="117" width="1" height="1" fill="#5e3a24" />
<rect x="127" y="115" width="1" height="10" fill="#f18a42" />
<rect x="126" y="119" width="3" height="5" fill="#f18a42" />
<rect x="127" y="120" width="1" height="3" fill="#5e3a24" />
<rect x="131" y="118" width="1" height="12" fill="#f18a42" />
<rect x="130" y="124" width="3" height="4" fill="#f18a42" />
<rect x="131" y="125" width="1" height="2" fill="#5e3a24" />
<rect x="136" y="123" width="1" height="6" fill="#f18a42" />
<rect x="135" y="125" width="3" height="3" fill="#f18a42" />
<rect x="136" y="125" width="1" height="3" fill="#ffa258" />
<rect x="140" y="98" width="1" height="28" fill="#f18a42" />
<rect x="139" y="100" width="3" height="26" fill="#f18a42" />
<rect x="140" y="100" width="1" height="26" fill="#ffa258" />
<rect x="144" y="93" width="1" height="31" fill="#f18a42" />
<rect x="143" y="99" width="3" height="15" fill="#f18a42" />
<rect x="144" y="100" width="1" height="13" fill="#5e3a24" />
<rect x="149" y="98" width="1" height="18" fill="#f18a42" />
<rect x="148" y="113" width="3" height="1" fill="#f18a42" />
<rect x="153" y="109" width="1" height="7" fill="#f18a42" />
<rect x="152" y="112" width="3" height="1" fill="#f18a42" />
<rect x="157" y="101" width="1" height="15" fill="#f18a42" />
<rect x="156" y="107" width="3" height="5" fill="#f18a42" />
<rect x="157" y="107" width="1" height="5" fill="#ffa258" />
<rect x="162" y="97" width="1" height="11" fill="#f18a42" />
<rect x="161" y="100" width="3" height="6" fill="#f18a42" />
<rect x="162" y="100" width="1" height="6" fill="#ffa258" />
<rect x="166" y="90" width="1" height="13" fill="#f18a42" />
<rect x="165" y="98" width="3" height="1" fill="#f18a42" />
<rect x="171" y="88" width="1" height="14" fill="#f18a42" />
<rect x="170" y="93" width="3" height="3" fill="#f18a42" />
<rect x="171" y="93" width="1" height="3" fill="#ffa258" />
<rect x="175" y="81" width="1" height="20" fill="#f18a42" />
<rect x="174" y="92" width="3" height="1" fill="#f18a42" />
<rect x="180" y="89" width="1" height="13" fill="#f18a42" />
<rect x="179" y="93" width="3" height="1" fill="#f18a42" />
<rect x="184" y="80" width="1" height="18" fill="#f18a42" />
<rect x="183" y="86" width="3" height="8" fill="#f18a42" />
<rect x="184" y="86" width="1" height="8" fill="#ffa258" />
<rect x="189" y="72" width="1" height="16" fill="#f18a42" />
<rect x="188" y="79" width="3" height="6" fill="#f18a42" />
<rect x="189" y="79" width="1" height="6" fill="#ffa258" />
<rect x="193" y="74" width="1" height="20" fill="#f18a42" />
<rect x="192" y="78" width="3" height="13" fill="#f18a42" />
<rect x="193" y="79" width="1" height="11" fill="#5e3a24" />
<rect x="198" y="72" width="1" height="21" fill="#f18a42" />
<rect x="197" y="76" width="3" height="14" fill="#f18a42" />
<rect x="198" y="76" width="1" height="14" fill="#ffa258" />
<rect x="202" y="64" width="1" height="21" fill="#f18a42" />
<rect x="201" y="75" width="3" height="6" fill="#f18a42" />
<rect x="202" y="76" width="1" height="4" fill="#5e3a24" />
<rect x="207" y="71" width="1" height="11" fill="#f18a42" />
<rect x="206" y="73" width="3" height="7" fill="#f18a42" />
<rect x="207" y="73" width="1" height="7" fill="#ffa258" />
<rect x="211" y="74" width="1" height="27" fill="#f18a42" />
<rect x="210" y="74" width="3" height="25" fill="#f18a42" />
<rect x="211" y="75" width="1" height="23" fill="#5e3a24" />
<rect x="216" y="89" width="1" height="11" fill="#f18a42" />
<rect x="215" y="97" width="3" height="2" fill="#f18a42" />
<rect x="216" y="97" width="1" height="2" fill="#ffa258" />
<rect x="220" y="76" width="1" height="24" fill="#f18a42" />
<rect x="219" y="80" width="3" height="14" fill="#f18a42" />
<rect x="220" y="80" width="1" height="14" fill="#ffa258" />
<rect x="225" y="67" width="1" height="14" fill="#f18a42" />
<rect x="224" y="71" width="3" height="8" fill="#f18a42" />
<rect x="225" y="71" width="1" height="8" fill="#ffa258" />
<rect x="229" y="65" width="1" height="28" fill="#f18a42" />
<rect x="228" y="69" width="3" height="23" fill="#f18a42" />
<rect x="229" y="70" width="1" height="21" fill="#5e3a24" />
<rect x="234" y="88" width="1" height="12" fill="#f18a42" />
<rect x="233" y="94" width="3" height="1" fill="#f18a42" />
<rect x="238" y="90" width="1" height="10" fill="#f18a42" />
<rect x="243" y="81" width="1" height="11" fill="#f18a42" />
<rect x="242" y="86" width="3" height="6" fill="#f18a42" />
<rect x="243" y="86" width="1" height="6" fill="#ffa258" />
<rect x="247" y="80" width="1" height="13" fill="#f18a42" />
<rect x="246" y="84" width="3" height="1" fill="#f18a42" />
<rect x="252" y="74" width="1" height="14" fill="#f18a42" />
<rect x="251" y="83" width="3" height="1" fill="#f18a42" />
<rect x="256" y="71" width="1" height="22" fill="#f18a42" />
<rect x="255" y="74" width="3" height="8" fill="#f18a42" />
<rect x="256" y="74" width="1" height="8" fill="#ffa258" />
<rect x="261" y="67" width="1" height="9" fill="#f18a42" />
<rect x="260" y="74" width="3" height="1" fill="#f18a42" />
<rect x="265" y="56" width="1" height="21" fill="#f18a42" />
<rect x="264" y="67" width="3" height="7" fill="#f18a42" />
<rect x="265" y="67" width="1" height="7" fill="#ffa258" />
<rect x="270" y="62" width="1" height="20" fill="#f18a42" />
<rect x="269" y="66" width="3" height="8" fill="#f18a42" />
<rect x="270" y="67" width="1" height="6" fill="#5e3a24" />
<rect x="274" y="51" width="1" height="23" fill="#f18a42" />
<rect x="273" y="60" width="3" height="14" fill="#f18a42" />
<rect x="274" y="60" width="1" height="14" fill="#ffa258" />
<rect x="279" y="51" width="1" height="10" fill="#f18a42" />
<rect x="278" y="52" width="3" height="7" fill="#f18a42" />
<rect x="279" y="52" width="1" height="7" fill="#ffa258" />
<rect x="283" y="51" width="1" height="36" fill="#f18a42" />
<rect x="282" y="51" width="3" height="25" fill="#f18a42" />
<rect x="283" y="52" width="1" height="23" fill="#5e3a24" />
<rect x="288" y="51" width="1" height="28" fill="#f18a42" />
<rect x="287" y="60" width="3" height="16" fill="#f18a42" />
<rect x="288" y="60" width="1" height="16" fill="#ffa258" />
<rect x="292" y="48" width="1" height="13" fill="#f18a42" />
<rect x="291" y="56" width="3" height="3" fill="#f18a42" />
<rect x="292" y="56" width="1" height="3" fill="#ffa258" />
<rect x="296" y="51" width="1" height="11" fill="#f18a42" />
<rect x="295" y="55" width="3" height="5" fill="#f18a42" />
<rect x="296" y="56" width="1" height="3" fill="#5e3a24" />
<rect x="301" y="57" width="1" height="17" fill="#f18a42" />
<rect x="300" y="59" width="3" height="15" fill="#f18a42" />
<rect x="301" y="60" width="1" height="13" fill="#5e3a24" />
<rect x="305" y="70" width="1" height="28" fill="#f18a42" />
<rect x="304" y="73" width="3" height="13" fill="#f18a42" />
<rect x="305" y="74" width="1" height="11" fill="#5e3a24" />
<rect x="309" y="78" width="1" height="18" fill="#f18a42" />
<rect x="308" y="86" width="3" height="3" fill="#f18a42" />
<rect x="309" y="87" width="1" height="1" fill="#5e3a24" />
<rect x="314" y="80" width="1" height="13" fill="#f18a42" />
<rect x="318" y="81" width="1" height="11" fill="#f18a42" />
<rect x="317" y="87" width="3" height="4" fill="#f18a42" />
<rect x="318" y="88" width="1" height="2" fill="#5e3a24" />
<rect x="323" y="86" width="1" height="17" fill="#f18a42" />
<rect x="322" y="89" width="3" height="3" fill="#f18a42" />
<rect x="323" y="89" width="1" height="3" fill="#ffa258" />
<rect x="327" y="84" width="1" height="29" fill="#f18a42" />
<rect x="326" y="88" width="3" height="20" fill="#f18a42" />
<rect x="327" y="89" width="1" height="18" fill="#5e3a24" />
<rect x="332" y="93" width="1" height="17" fill="#f18a42" />
<rect x="331" y="95" width="3" height="12" fill="#f18a42" />
<rect x="332" y="95" width="1" height="12" fill="#ffa258" />
<rect x="336" y="77" width="1" height="32" fill="#f18a42" />
<rect x="341" y="92" width="1" height="31" fill="#f18a42" />
<rect x="340" y="94" width="3" height="29" fill="#f18a42" />
<rect x="341" y="95" width="1" height="27" fill="#5e3a24" />
<rect x="345" y="106" width="1" height="22" fill="#f18a42" />
<rect x="344" y="106" width="3" height="18" fill="#f18a42" />
<rect x="345" y="107" width="1" height="16" fill="#5e3a24" />
<rect x="350" y="122" width="1" height="13" fill="#f18a42" />
<rect x="349" y="124" width="3" height="8" fill="#f18a42" />
<rect x="350" y="125" width="1" height="6" fill="#5e3a24" />
<rect x="354" y="117" width="1" height="17" fill="#f18a42" />
<rect x="353" y="124" width="3" height="7" fill="#f18a42" />
<rect x="354" y="124" width="1" height="7" fill="#ffa258" />
<rect x="359" y="120" width="1" height="21" fill="#f18a42" />
<rect x="358" y="123" width="3" height="13" fill="#f18a42" />
<rect x="359" y="124" width="1" height="11" fill="#5e3a24" />
<rect x="363" y="131" width="1" height="21" fill="#f18a42" />
<rect x="362" y="134" width="3" height="1" fill="#f18a42" />
<rect x="368" y="129" width="1" height="13" fill="#f18a42" />
<rect x="367" y="133" width="3" height="9" fill="#f18a42" />
<rect x="368" y="134" width="1" height="7" fill="#5e3a24" />
<rect x="372" y="134" width="1" height="10" fill="#f18a42" />
<rect x="371" y="138" width="3" height="3" fill="#f18a42" />
<rect x="372" y="138" width="1" height="3" fill="#ffa258" />
<rect x="377" y="135" width="1" height="14" fill="#f18a42" />
<rect x="376" y="136" width="3" height="12" fill="#f18a42" />
<rect x="377" y="137" width="1" height="10" fill="#5e3a24" />
<rect x="381" y="129" width="1" height="19" fill="#f18a42" />
<rect x="380" y="142" width="3" height="4" fill="#f18a42" />
<rect x="381" y="142" width="1" height="4" fill="#ffa258" />
<rect x="386" y="127" width="1" height="21" fill="#f18a42" />
<rect x="390" y="132" width="1" height="17" fill="#f18a42" />
<rect x="389" y="134" width="3" height="6" fill="#f18a42" />
<rect x="390" y="134" width="1" height="6" fill="#ffa258" />
<rect x="395" y="114" width="1" height="23" fill="#f18a42" />
<rect x="394" y="116" width="3" height="17" fill="#f18a42" />
<rect x="395" y="116" width="1" height="17" fill="#ffa258" />
<rect x="399" y="109" width="1" height="9" fill="#f18a42" />
<rect x="404" y="109" width="1" height="8" fill="#f18a42" />
<rect x="403" y="113" width="3" height="1" fill="#f18a42" />
<rect x="408" y="106" width="1" height="20" fill="#f18a42" />
<rect x="407" y="114" width="3" height="8" fill="#f18a42" />
<rect x="408" y="115" width="1" height="6" fill="#5e3a24" />
<rect x="413" y="120" width="1" height="18" fill="#f18a42" />
<rect x="412" y="122" width="3" height="10" fill="#f18a42" />
<rect x="413" y="123" width="1" height="8" fill="#5e3a24" />
<rect x="417" y="126" width="1" height="16" fill="#f18a42" />
<rect x="416" y="130" width="3" height="9" fill="#f18a42" />
<rect x="417" y="131" width="1" height="7" fill="#5e3a24" />
<rect x="422" y="129" width="1" height="19" fill="#f18a42" />
<rect x="421" y="138" width="3" height="1" fill="#f18a42" />
<rect x="426" y="131" width="1" height="11" fill="#f18a42" />
<rect x="425" y="136" width="3" height="3" fill="#f18a42" />
<rect x="426" y="136" width="1" height="3" fill="#ffa258" />
<rect x="431" y="131" width="1" height="19" fill="#f18a42" />
<rect x="430" y="135" width="3" height="8" fill="#f18a42" />
<rect x="431" y="136" width="1" height="6" fill="#5e3a24" />
<rect x="435" y="135" width="1" height="15" fill="#f18a42" />
<rect x="434" y="139" width="3" height="3" fill="#f18a42" />
<rect x="435" y="139" width="1" height="3" fill="#ffa258" />
<rect x="440" y="133" width="1" height="21" fill="#f18a42" />
<rect x="439" y="138" width="3" height="14" fill="#f18a42" />
<rect x="440" y="139" width="1" height="12" fill="#5e3a24" />
<rect x="444" y="138" width="1" height="24" fill="#f18a42" />
<rect x="443" y="141" width="3" height="10" fill="#f18a42" />
<rect x="444" y="141" width="1" height="10" fill="#ffa258" />
<rect x="449" y="128" width="1" height="17" fill="#f18a42" />
<rect x="448" y="136" width="3" height="4" fill="#f18a42" />
<rect x="449" y="136" width="1" height="4" fill="#ffa258" />
<rect x="453" y="134" width="1" height="9" fill="#f18a42" />
<rect x="452" y="135" width="3" height="6" fill="#f18a42" />
<rect x="453" y="136" width="1" height="4" fill="#5e3a24" />
<rect x="457" y="137" width="1" height="10" fill="#f18a42" />
<rect x="456" y="140" width="3" height="4" fill="#f18a42" />
<rect x="457" y="141" width="1" height="2" fill="#5e3a24" />
<rect x="462" y="142" width="1" height="16" fill="#f18a42" />
<rect x="461" y="143" width="3" height="9" fill="#f18a42" />
<rect x="462" y="144" width="1" height="7" fill="#5e3a24" />
<rect x="466" y="144" width="1" height="15" fill="#f18a42" />
<rect x="465" y="151" width="3" height="6" fill="#f18a42" />
<rect x="466" y="152" width="1" height="4" fill="#5e3a24" />
<rect x="470" y="149" width="1" height="26" fill="#f18a42" />
<rect x="469" y="156" width="3" height="13" fill="#f18a42" />
<rect x="470" y="157" width="1" height="11" fill="#5e3a24" />
<rect x="475" y="165" width="1" height="13" fill="#f18a42" />
<rect x="474" y="168" width="3" height="10" fill="#f18a42" />
<rect x="475" y="169" width="1" height="8" fill="#5e3a24" />
<rect x="479" y="175" width="1" height="9" fill="#f18a42" />
<rect x="478" y="177" width="3" height="1" fill="#f18a42" />
<rect x="484" y="172" width="1" height="11" fill="#f18a42" />
<rect x="483" y="178" width="3" height="4" fill="#f18a42" />
<rect x="484" y="179" width="1" height="2" fill="#5e3a24" />
<rect x="488" y="171" width="1" height="12" fill="#f18a42" />
<rect x="487" y="181" width="3" height="1" fill="#f18a42" />
<rect x="493" y="177" width="1" height="12" fill="#f18a42" />
<rect x="492" y="181" width="3" height="7" fill="#f18a42" />
<rect x="493" y="182" width="1" height="5" fill="#5e3a24" />
<rect x="497" y="174" width="1" height="15" fill="#f18a42" />
<rect x="496" y="178" width="3" height="9" fill="#f18a42" />
<rect x="497" y="178" width="1" height="9" fill="#ffa258" />
<rect x="502" y="174" width="1" height="7" fill="#f18a42" />
<rect x="501" y="176" width="3" height="1" fill="#f18a42" />
<rect x="506" y="169" width="1" height="11" fill="#f18a42" />
<rect x="505" y="174" width="3" height="3" fill="#f18a42" />
<rect x="506" y="174" width="1" height="3" fill="#ffa258" />
<rect x="511" y="166" width="1" height="8" fill="#f18a42" />
<rect x="510" y="169" width="3" height="4" fill="#f18a42" />
<rect x="511" y="169" width="1" height="4" fill="#ffa258" />
<rect x="515" y="156" width="1" height="18" fill="#f18a42" />
<rect x="514" y="162" width="3" height="6" fill="#f18a42" />
<rect x="515" y="162" width="1" height="6" fill="#ffa258" />
<rect x="520" y="148" width="1" height="18" fill="#f18a42" />
<rect x="519" y="154" width="3" height="7" fill="#f18a42" />
<rect x="520" y="154" width="1" height="7" fill="#ffa258" />
<rect x="524" y="144" width="1" height="16" fill="#f18a42" />
<rect x="523" y="153" width="3" height="3" fill="#f18a42" />
<rect x="524" y="154" width="1" height="1" fill="#5e3a24" />
<rect x="529" y="151" width="1" height="8" fill="#f18a42" />
<rect x="528" y="154" width="3" height="1" fill="#f18a42" />
<rect x="533" y="143" width="1" height="13" fill="#f18a42" />
<rect x="532" y="147" width="3" height="5" fill="#f18a42" />
<rect x="533" y="147" width="1" height="5" fill="#ffa258" />
<rect x="538" y="142" width="1" height="8" fill="#f18a42" />
<rect x="537" y="146" width="3" height="2" fill="#f18a42" />
<rect x="538" y="146" width="1" height="2" fill="#ffa258" />
<rect x="542" y="137" width="1" height="15" fill="#f18a42" />
<rect x="541" y="147" width="3" height="3" fill="#f18a42" />
<rect x="542" y="148" width="1" height="1" fill="#5e3a24" />
<rect x="547" y="148" width="1" height="21" fill="#f18a42" />
<rect x="546" y="148" width="3" height="20" fill="#f18a42" />
<rect x="547" y="149" width="1" height="18" fill="#5e3a24" />
<rect x="551" y="157" width="1" height="21" fill="#f18a42" />
<rect x="550" y="162" width="3" height="4" fill="#f18a42" />
<rect x="551" y="162" width="1" height="4" fill="#ffa258" />
<rect x="556" y="160" width="1" height="8" fill="#f18a42" />
<rect x="555" y="161" width="3" height="3" fill="#f18a42" />
<rect x="556" y="162" width="1" height="1" fill="#5e3a24" />
<rect x="560" y="156" width="1" height="10" fill="#f18a42" />
<rect x="559" y="160" width="3" height="3" fill="#f18a42" />
<rect x="560" y="160" width="1" height="3" fill="#ffa258" />
<rect x="565" y="149" width="1" height="11" fill="#f18a42" />
<rect x="564" y="153" width="3" height="5" fill="#f18a42" />
<rect x="565" y="153" width="1" height="5" fill="#ffa258" />
<rect x="569" y="147" width="1" height="13" fill="#f18a42" />
<rect x="574" y="139" width="1" height="15" fill="#f18a42" />
<rect x="573" y="146" width="3" height="5" fill="#f18a42" />
<rect x="574" y="146" width="1" height="5" fill="#ffa258" />
<rect x="578" y="130" width="1" height="19" fill="#f18a42" />
<rect x="577" y="146" width="3" height="1" fill="#f18a42" />
<rect x="583" y="132" width="1" height="18" fill="#f18a42" />
<rect x="582" y="134" width="3" height="11" fill="#f18a42" />
<rect x="583" y="134" width="1" height="11" fill="#ffa258" />
<rect x="587" y="128" width="1" height="10" fill="#f18a42" />
<rect x="586" y="133" width="3" height="1" fill="#f18a42" />
<rect x="592" y="128" width="1" height="9" fill="#f18a42" />
<rect x="591" y="132" width="3" height="1" fill="#f18a42" />
<rect x="596" y="125" width="1" height="18" fill="#f18a42" />
<rect x="595" y="128" width="3" height="3" fill="#f18a42" />
<rect x="596" y="128" width="1" height="3" fill="#ffa258" />
<rect x="601" y="122" width="1" height="17" fill="#f18a42" />
<rect x="600" y="127" width="3" height="10" fill="#f18a42" />
<rect x="601" y="128" width="1" height="8" fill="#5e3a24" />
<rect x="605" y="125" width="1" height="16" fill="#f18a42" />
<rect x="604" y="130" width="3" height="6" fill="#f18a42" />
<rect x="605" y="130" width="1" height="6" fill="#ffa258" />
<rect x="610" y="127" width="1" height="10" fill="#f18a42" />
<rect x="609" y="129" width="3" height="7" fill="#f18a42" />
<rect x="610" y="130" width="1" height="5" fill="#5e3a24" />
<rect x="614" y="130" width="1" height="6" fill="#f18a42" />
<rect x="613" y="133" width="3" height="1" fill="#f18a42" />
<rect x="618" y="126" width="1" height="12" fill="#f18a42" />
<rect x="617" y="131" width="3" height="1" fill="#f18a42" />
<rect x="623" y="125" width="1" height="9" fill="#f18a42" />
<rect x="622" y="130" width="3" height="2" fill="#f18a42" />
<rect x="623" y="130" width="1" height="2" fill="#ffa258" />
<rect x="627" y="129" width="1" height="19" fill="#f18a42" />
<rect x="626" y="131" width="3" height="9" fill="#f18a42" />
<rect x="627" y="132" width="1" height="7" fill="#5e3a24" />
<rect x="631" y="139" width="1" height="20" fill="#f18a42" />
<rect x="630" y="141" width="3" height="8" fill="#f18a42" />
<rect x="631" y="142" width="1" height="6" fill="#5e3a24" />
<rect x="636" y="143" width="1" height="7" fill="#f18a42" />
<rect x="635" y="148" width="3" height="1" fill="#f18a42" />
<rect x="640" y="144" width="1" height="8" fill="#f18a42" />
<rect x="639" y="146" width="3" height="5" fill="#f18a42" />
<rect x="640" y="147" width="1" height="3" fill="#5e3a24" />
<rect x="645" y="144" width="1" height="10" fill="#f18a42" />
<rect x="644" y="150" width="3" height="3" fill="#f18a42" />
<rect x="645" y="151" width="1" height="1" fill="#5e3a24" />
<rect x="649" y="146" width="1" height="17" fill="#f18a42" />
<rect x="648" y="149" width="3" height="3" fill="#f18a42" />
<rect x="649" y="149" width="1" height="3" fill="#ffa258" />
<rect x="654" y="142" width="1" height="15" fill="#f18a42" />
<rect x="653" y="146" width="3" height="2" fill="#f18a42" />
<rect x="654" y="146" width="1" height="2" fill="#ffa258" />
<rect x="658" y="129" width="1" height="19" fill="#f18a42" />
<rect x="663" y="132" width="1" height="12" fill="#f18a42" />
<rect x="662" y="135" width="3" height="7" fill="#f18a42" />
<rect x="663" y="135" width="1" height="7" fill="#ffa258" />
<rect x="667" y="132" width="1" height="6" fill="#f18a42" />
<rect x="666" y="134" width="3" height="3" fill="#f18a42" />
<rect x="667" y="135" width="1" height="1" fill="#5e3a24" />
<rect x="672" y="133" width="1" height="9" fill="#f18a42" />
<rect x="671" y="136" width="3" height="3" fill="#f18a42" />
<rect x="672" y="137" width="1" height="1" fill="#5e3a24" />
<rect x="676" y="134" width="1" height="12" fill="#f18a42" />
<rect x="675" y="138" width="3" height="4" fill="#f18a42" />
<rect x="676" y="139" width="1" height="2" fill="#5e3a24" />
<rect x="681" y="142" width="1" height="22" fill="#f18a42" />
<rect x="680" y="145" width="3" height="19" fill="#f18a42" />
<rect x="681" y="146" width="1" height="17" fill="#5e3a24" />
<rect x="685" y="157" width="1" height="30" fill="#f18a42" />
<rect x="684" y="163" width="3" height="4" fill="#f18a42" />
<rect x="685" y="164" width="1" height="2" fill="#5e3a24" />
<rect x="690" y="151" width="1" height="19" fill="#f18a42" />
<rect x="694" y="158" width="1" height="17" fill="#f18a42" />
<rect x="693" y="164" width="3" height="9" fill="#f18a42" />
<rect x="694" y="165" width="1" height="7" fill="#5e3a24" />
<rect x="699" y="162" width="1" height="12" fill="#f18a42" />
<rect x="698" y="170" width="3" height="2" fill="#f18a42" />
<rect x="699" y="170" width="1" height="2" fill="#ffa258" />
<rect x="703" y="159" width="1" height="17" fill="#f18a42" />
<rect x="702" y="169" width="3" height="3" fill="#f18a42" />
<rect x="703" y="170" width="1" height="1" fill="#5e3a24" />
<rect x="708" y="157" width="1" height="14" fill="#f18a42" />
<rect x="707" y="167" width="3" height="4" fill="#f18a42" />
<rect x="708" y="167" width="1" height="4" fill="#ffa258" />
<rect x="712" y="145" width="1" height="28" fill="#f18a42" />
<rect x="711" y="156" width="3" height="10" fill="#f18a42" />
<rect x="712" y="156" width="1" height="10" fill="#ffa258" />
<rect x="717" y="146" width="1" height="11" fill="#f18a42" />
<rect x="721" y="152" width="1" height="13" fill="#f18a42" />
<rect x="720" y="154" width="3" height="9" fill="#f18a42" />
<rect x="721" y="155" width="1" height="7" fill="#5e3a24" />
<rect x="726" y="158" width="1" height="12" fill="#f18a42" />
<rect x="725" y="162" width="3" height="4" fill="#f18a42" />
<rect x="726" y="163" width="1" height="2" fill="#5e3a24" />
<rect x="730" y="156" width="1" height="14" fill="#f18a42" />
<rect x="729" y="159" width="3" height="7" fill="#f18a42" />
<rect x="730" y="159" width="1" height="7" fill="#ffa258" />
<rect x="735" y="142" width="1" height="22" fill="#f18a42" />
<rect x="734" y="151" width="3" height="5" fill="#f18a42" />
<rect x="735" y="151" width="1" height="5" fill="#ffa258" />
<rect x="739" y="138" width="1" height="17" fill="#f18a42" />
<rect x="744" y="144" width="1" height="10" fill="#f18a42" />
<rect x="743" y="149" width="3" height="5" fill="#f18a42" />
<rect x="744" y="150" width="1" height="3" fill="#5e3a24" />
<rect x="748" y="148" width="1" height="7" fill="#f18a42" />
<rect x="747" y="149" width="3" height="4" fill="#f18a42" />
<rect x="748" y="150" width="1" height="2" fill="#5e3a24" />
<rect x="752" y="148" width="1" height="7" fill="#f18a42" />
<rect x="751" y="151" width="3" height="3" fill="#f18a42" />
<rect x="752" y="151" width="1" height="3" fill="#ffa258" />
<rect x="757" y="149" width="1" height="23" fill="#f18a42" />
<rect x="756" y="153" width="3" height="19" fill="#f18a42" />
<rect x="757" y="154" width="1" height="17" fill="#5e3a24" />
<rect x="761" y="163" width="1" height="18" fill="#f18a42" />
<rect x="760" y="171" width="3" height="8" fill="#f18a42" />
<rect x="761" y="172" width="1" height="6" fill="#5e3a24" />
<rect x="765" y="165" width="1" height="17" fill="#f18a42" />
<rect x="764" y="178" width="3" height="4" fill="#f18a42" />
<rect x="765" y="179" width="1" height="2" fill="#5e3a24" />
<rect x="770" y="175" width="1" height="13" fill="#f18a42" />
<rect x="769" y="181" width="3" height="7" fill="#f18a42" />
<rect x="770" y="182" width="1" height="5" fill="#5e3a24" />
<rect x="774" y="180" width="1" height="8" fill="#f18a42" />
<rect x="773" y="183" width="3" height="3" fill="#f18a42" />
<rect x="774" y="183" width="1" height="3" fill="#ffa258" />
<rect x="779" y="171" width="1" height="12" fill="#f18a42" />
<rect x="778" y="179" width="3" height="3" fill="#f18a42" />
<rect x="779" y="179" width="1" height="3" fill="#ffa258" />
<rect x="783" y="171" width="1" height="13" fill="#f18a42" />
<rect x="782" y="172" width="3" height="6" fill="#f18a42" />
<rect x="783" y="172" width="1" height="6" fill="#ffa258" />
<rect x="788" y="172" width="1" height="31" fill="#f18a42" />
<rect x="787" y="172" width="3" height="24" fill="#f18a42" />
<rect x="788" y="173" width="1" height="22" fill="#5e3a24" />
<rect x="792" y="189" width="1" height="17" fill="#f18a42" />
<rect x="791" y="195" width="3" height="11" fill="#f18a42" />
<rect x="792" y="196" width="1" height="9" fill="#5e3a24" />
<rect x="797" y="194" width="1" height="16" fill="#f18a42" />
<rect x="796" y="197" width="3" height="8" fill="#f18a42" />
<rect x="797" y="197" width="1" height="8" fill="#ffa258" />
<rect x="801" y="191" width="1" height="8" fill="#f18a42" />
<rect x="800" y="193" width="3" height="3" fill="#f18a42" />
<rect x="801" y="193" width="1" height="3" fill="#ffa258" />
<rect x="806" y="189" width="1" height="7" fill="#f18a42" />
<rect x="805" y="191" width="3" height="3" fill="#f18a42" />
<rect x="806" y="191" width="1" height="3" fill="#ffa258" />
<rect x="810" y="191" width="1" height="11" fill="#f18a42" />
<rect x="809" y="192" width="3" height="8" fill="#f18a42" />
<rect x="810" y="193" width="1" height="6" fill="#5e3a24" />
<rect x="815" y="198" width="1" height="15" fill="#f18a42" />
<rect x="814" y="199" width="3" height="11" fill="#f18a42" />
<rect x="815" y="200" width="1" height="9" fill="#5e3a24" />
<rect x="819" y="198" width="1" height="15" fill="#f18a42" />
<rect x="818" y="204" width="3" height="5" fill="#f18a42" />
<rect x="819" y="204" width="1" height="5" fill="#ffa258" />
<rect x="824" y="195" width="1" height="10" fill="#f18a42" />
<rect x="823" y="199" width="3" height="3" fill="#f18a42" />
<rect x="824" y="199" width="1" height="3" fill="#ffa258" />
<rect x="828" y="192" width="1" height="8" fill="#f18a42" />
<rect x="833" y="194" width="1" height="13" fill="#f18a42" />
<rect x="832" y="197" width="3" height="9" fill="#f18a42" />
<rect x="833" y="198" width="1" height="7" fill="#5e3a24" />
<rect x="837" y="203" width="1" height="16" fill="#f18a42" />
<rect x="836" y="204" width="3" height="14" fill="#f18a42" />
<rect x="837" y="205" width="1" height="12" fill="#5e3a24" />
<rect x="842" y="214" width="1" height="9" fill="#f18a42" />
<rect x="841" y="216" width="3" height="1" fill="#f18a42" />
<rect x="846" y="214" width="1" height="17" fill="#f18a42" />
<rect x="845" y="216" width="3" height="10" fill="#f18a42" />
<rect x="846" y="217" width="1" height="8" fill="#5e3a24" />
<rect x="851" y="225" width="1" height="11" fill="#f18a42" />
<rect x="850" y="226" width="3" height="5" fill="#f18a42" />
<rect x="851" y="227" width="1" height="3" fill="#5e3a24" />
<rect x="855" y="226" width="1" height="9" fill="#f18a42" />
<rect x="860" y="227" width="1" height="11" fill="#f18a42" />
<rect x="859" y="229" width="3" height="6" fill="#f18a42" />
<rect x="860" y="230" width="1" height="4" fill="#5e3a24" />
<rect x="864" y="234" width="1" height="1" fill="#f18a42" />
</g>
<polyline points="16.2,140.6 22.5,138.1 32.5,135.0 41.2,135.0 51.2,133.8 60.0,131.0 67.5,128.8 77.5,128.8 91.2,128.8 105.0,128.8 113.8,128.5 117.5,127.2 128.8,126.9 140.0,125.6 147.5,124.8 153.8,124.5 157.5,124.4 168.8,121.5 181.2,118.8 193.8,115.2 206.2,111.9 225.0,108.1 237.5,106.5 250.0,104.8 262.5,102.0 275.0,98.2 287.5,94.5 300.0,91.0 312.5,91.0 320.0,91.0 332.5,92.2 342.5,93.1 351.2,96.0 357.5,98.1 363.8,99.0 370.0,101.0 376.2,102.5 385.0,106.2 395.0,106.9 401.2,108.5 413.8,109.0 426.2,112.8 432.5,113.1 438.8,115.2 447.5,116.9 455.0,118.1 462.5,120.0 470.0,122.5 477.5,126.2 485.0,130.0 492.5,133.1 500.0,135.6 507.5,137.5 515.0,139.4 520.0,141.0 527.5,141.2 535.0,141.2 542.5,141.5 548.8,142.8 555.0,145.0 562.5,145.0 571.2,145.0 582.5,145.0 592.5,144.8 597.5,142.5 607.5,142.2 620.0,141.5 632.5,141.5 645.0,142.5 657.5,142.8 670.0,142.5 680.0,142.5 685.0,144.4 690.0,144.8 697.5,145.6 705.0,148.1 715.0,148.8 725.0,150.6 733.8,150.6 742.5,150.6 750.0,150.6 757.5,151.9 765.0,152.5 772.5,154.8 780.0,156.2 787.5,158.1 795.0,160.0 802.5,163.1 808.8,163.5 815.0,166.0 822.5,168.1 827.5,170.2 830.0,171.2 836.2,173.1 842.5,175.0 850.0,177.5 855.0,180.0 860.0,182.5 863.8,184.4" fill="none" stroke="#c41d28" stroke-width="1.35" stroke-linejoin="round"/>
<polyline points="16.2,114.4 22.5,112.2 28.8,110.4 32.5,110.2 37.5,112.5 46.2,114.0 51.2,113.1 57.5,110.6 63.8,110.4 72.5,110.4 77.5,111.9 82.5,115.0 87.5,117.2 95.0,118.4 105.0,118.8 113.8,118.8 122.5,118.8 132.5,121.0 140.0,118.8 147.5,118.1 153.8,117.2 157.5,116.2 168.8,111.9 181.2,106.9 193.8,101.9 206.2,96.2 216.2,96.0 225.0,92.5 235.0,92.8 245.0,91.9 252.5,91.2 256.2,88.9 265.0,85.1 275.0,80.8 283.1,77.6 292.5,74.2 300.0,74.2 306.2,75.1 315.0,77.2 327.5,82.2 336.2,84.4 345.0,90.6 357.5,99.4 370.0,108.1 380.0,115.0 386.2,118.8 395.0,119.4 406.2,118.5 415.0,121.2 426.2,123.8 435.0,126.5 443.8,130.6 452.5,131.9 460.0,133.8 467.5,137.5 475.0,143.1 482.5,148.1 490.0,153.1 497.5,157.5 505.0,160.6 510.0,161.2 520.0,161.2 527.5,160.6 533.8,158.1 540.0,156.9 546.2,157.2 552.5,158.8 558.8,159.0 565.0,158.1 577.5,155.0 586.2,151.9 595.0,148.5 605.0,145.0 613.8,142.8 621.2,141.0 627.5,141.0 635.0,142.2 645.0,144.8 655.0,144.8 663.8,143.8 670.0,142.5 676.2,142.5 682.5,144.4 688.8,146.9 696.2,151.9 702.5,154.8 712.5,155.0 721.2,156.0 731.2,156.5 740.0,156.5 748.8,155.0 755.0,155.6 760.0,159.4 767.5,162.8 775.0,165.6 785.0,167.5 790.0,170.6 796.2,174.0 802.5,176.2 808.8,178.8 815.0,181.9 822.5,186.0 828.8,187.5 835.0,189.0 840.0,192.5 847.5,198.8 855.0,203.1 860.0,206.2 863.8,207.5" fill="none" stroke="#0c0cc4" stroke-width="1.15" stroke-linejoin="round"/>
<!-- legend box -->
<rect x="17" y="38" width="274" height="13" fill="#3b414b" shape-rendering="crispEdges"/>
<rect x="17" y="255" width="31" height="12" fill="#3b414b" shape-rendering="crispEdges"/>
<rect x="17" y="328" width="17" height="12" fill="#3b414b" shape-rendering="crispEdges"/>
<text x="19" y="49" font-size="11" fill="#e3222c" textLength="134" lengthAdjust="spacingAndGlyphs">Exponential_Moving_Average</text>
<text x="156" y="49" font-size="11" fill="#1a1ae0" textLength="134" lengthAdjust="spacingAndGlyphs">Exponential_Moving_Average</text>
<g>
<rect x="16" y="37" width="31" height="22" fill="#fbfbfb" shape-rendering="crispEdges"/>
<rect x="16" y="37" width="31" height="5" fill="#dcdcdc" shape-rendering="crispEdges"/>
<rect x="20" y="45" width="10" height="10" rx="1.6" fill="url(#lr)" stroke="#b81818" stroke-width="0.6"/>
<rect x="33" y="45" width="10" height="10" rx="1.6" fill="url(#lb)" stroke="#1668a8" stroke-width="0.6"/>
</g>
<text x="18" y="265.5" font-size="11" fill="#10108a" textLength="29" lengthAdjust="spacingAndGlyphs">MACD</text>
<text x="18.5" y="339" font-size="11" fill="#f08a30" textLength="14.5" lengthAdjust="spacingAndGlyphs">RSI</text>
<!-- right axis labels -->
<g class="ax">
<text x="899.5" y="77" textLength="33" lengthAdjust="spacingAndGlyphs">1.2300</text>
<text x="899.5" y="125" textLength="33" lengthAdjust="spacingAndGlyphs">1.2200</text>
<text x="899.5" y="173" textLength="33" lengthAdjust="spacingAndGlyphs">1.2100</text>
<text x="899.5" y="221" textLength="33" lengthAdjust="spacingAndGlyphs">1.2000</text>
<text x="901.5" y="292.5" textLength="33" lengthAdjust="spacingAndGlyphs">+0.000</text>
<text x="900" y="351" textLength="11.5" lengthAdjust="spacingAndGlyphs">60</text>
<text x="900" y="380" textLength="11.5" lengthAdjust="spacingAndGlyphs">40</text>
</g>
<rect x="892" y="225" width="48" height="21" fill="#ffffff" shape-rendering="crispEdges"/>
<text x="901" y="239" font-size="11" fill="#3e444e" textLength="32.5" lengthAdjust="spacingAndGlyphs">1.1956</text>
<!-- month labels -->
<rect x="16" y="374" width="2" height="27" fill="#cfe6ea" shape-rendering="crispEdges"/>
<rect x="17.5" y="374.5" width="58.7" height="18.8" rx="2" fill="url(#ml)" stroke="#c6d6e6" stroke-width="1"/>
<text x="24" y="388" font-size="11" fill="#f8f8f8" stroke="#f8f8f8" stroke-width="0.25" textLength="46.3" lengthAdjust="spacingAndGlyphs">Дек 2020</text>
<rect x="211" y="374" width="2" height="27" fill="#cfe6ea" shape-rendering="crispEdges"/>
<rect x="212.5" y="374.5" width="59.7" height="18.8" rx="2" fill="url(#ml)" stroke="#c6d6e6" stroke-width="1"/>
<text x="219" y="388" font-size="11" fill="#f8f8f8" stroke="#f8f8f8" stroke-width="0.25" textLength="46" lengthAdjust="spacingAndGlyphs">Янв 2021</text>
<rect x="748" y="374" width="2" height="27" fill="#cfe6ea" shape-rendering="crispEdges"/>
<rect x="749.5" y="374.5" width="60.7" height="18.8" rx="2" fill="url(#ml)" stroke="#c6d6e6" stroke-width="1"/>
<text x="756" y="388" font-size="11" fill="#f8f8f8" stroke="#f8f8f8" stroke-width="0.25" textLength="45.6" lengthAdjust="spacingAndGlyphs">Фев 2021</text>
<!-- bottom axis labels -->
<g class="ax" text-anchor="middle">
<text x="31.7" y="420.4" textLength="11.4" lengthAdjust="spacingAndGlyphs">21</text>
<text x="58.7" y="420.4" textLength="11.4" lengthAdjust="spacingAndGlyphs">22</text>
<text x="85.7" y="420.4" textLength="11.4" lengthAdjust="spacingAndGlyphs">23</text>
<text x="112.7" y="420.4" textLength="11.4" lengthAdjust="spacingAndGlyphs">24</text>
<text x="139.7" y="420.4" textLength="11.4" lengthAdjust="spacingAndGlyphs">28</text>
<text x="156.7" y="420.4" textLength="11.4" lengthAdjust="spacingAndGlyphs">29</text>
<text x="183.7" y="420.4" textLength="11.4" lengthAdjust="spacingAndGlyphs">30</text>
<text x="210.7" y="420.4" textLength="5.7" lengthAdjust="spacingAndGlyphs">4</text>
<text x="237.7" y="420.4" textLength="5.7" lengthAdjust="spacingAndGlyphs">5</text>
<text x="264.7" y="420.4" textLength="5.7" lengthAdjust="spacingAndGlyphs">6</text>
<text x="291.7" y="420.4" textLength="5.7" lengthAdjust="spacingAndGlyphs">7</text>
<text x="317.7" y="420.4" textLength="5.7" lengthAdjust="spacingAndGlyphs">8</text>
<text x="344.7" y="420.4" textLength="11.4" lengthAdjust="spacingAndGlyphs">11</text>
<text x="371.7" y="420.4" textLength="11.4" lengthAdjust="spacingAndGlyphs">12</text>
<text x="398.7" y="420.4" textLength="11.4" lengthAdjust="spacingAndGlyphs">13</text>
<text x="425.7" y="420.4" textLength="11.4" lengthAdjust="spacingAndGlyphs">14</text>
<text x="452.7" y="420.4" textLength="11.4" lengthAdjust="spacingAndGlyphs">15</text>
<text x="478.7" y="420.4" textLength="11.4" lengthAdjust="spacingAndGlyphs">18</text>
<text x="505.7" y="420.4" textLength="11.4" lengthAdjust="spacingAndGlyphs">19</text>
<text x="532.7" y="420.4" textLength="11.4" lengthAdjust="spacingAndGlyphs">20</text>
<text x="559.7" y="420.4" textLength="11.4" lengthAdjust="spacingAndGlyphs">21</text>
<text x="586.7" y="420.4" textLength="11.4" lengthAdjust="spacingAndGlyphs">22</text>
<text x="613.7" y="420.4" textLength="11.4" lengthAdjust="spacingAndGlyphs">25</text>
<text x="639.7" y="420.4" textLength="11.4" lengthAdjust="spacingAndGlyphs">26</text>
<text x="666.7" y="420.4" textLength="11.4" lengthAdjust="spacingAndGlyphs">27</text>
<text x="693.7" y="420.4" textLength="11.4" lengthAdjust="spacingAndGlyphs">28</text>
<text x="720.7" y="420.4" textLength="11.4" lengthAdjust="spacingAndGlyphs">29</text>
<text x="747.7" y="420.4" textLength="5.7" lengthAdjust="spacingAndGlyphs">1</text>
<text x="773.7" y="420.4" textLength="5.7" lengthAdjust="spacingAndGlyphs">2</text>
<text x="800.7" y="420.4" textLength="5.7" lengthAdjust="spacingAndGlyphs">3</text>
<text x="827.7" y="420.4" textLength="5.7" lengthAdjust="spacingAndGlyphs">4</text>
<text x="854.7" y="420.4" textLength="5.7" lengthAdjust="spacingAndGlyphs">5</text>
<text x="881.7" y="420.4" textLength="5.7" lengthAdjust="spacingAndGlyphs">6</text>
</g>
<!-- title -->
<g fill="none" stroke="#557694" stroke-width="1" shape-rendering="crispEdges">
<path d="M9.5 8 V21.5 H23"/>
</g>
<path d="M8 10 L9.5 7.6 L11 10 M21.5 20 L23.8 21.5 L21.5 23" fill="none" stroke="#557694" stroke-width="1"/>
<g shape-rendering="crispEdges">
<rect x="13" y="12" width="1" height="8" fill="#3f6f52"/><rect x="12" y="14" width="3" height="4" fill="#4a7a58"/><rect x="13" y="14.6" width="1" height="2.8" fill="#86c486"/>
<rect x="17" y="7" width="1" height="10" fill="#3f6f52"/><rect x="16" y="9" width="3" height="6" fill="#4a7a58"/><rect x="17" y="9.6" width="1" height="4.8" fill="#86c486"/>
<rect x="21" y="10" width="1" height="9" fill="#6c4a58"/><rect x="20" y="12" width="3" height="5" fill="#7c5560"/><rect x="21" y="12.6" width="1" height="3.8" fill="#d08a84"/>
</g>
<g font-size="12.6" fill="#000000" stroke="#000000" stroke-width="0.15">
<text x="28.2" y="20" textLength="40.4" lengthAdjust="spacingAndGlyphs">График</text>
<text x="72.6" y="20" textLength="19.6" lengthAdjust="spacingAndGlyphs">EUR</text>
<text x="97.1" y="20" textLength="25.3" lengthAdjust="spacingAndGlyphs">/USD</text>
<text x="128.6" y="20" textLength="5.6" lengthAdjust="spacingAndGlyphs">4</text>
<text x="138.8" y="20" textLength="31.4" lengthAdjust="spacingAndGlyphs">ЧАСА</text>
</g>
<!-- caption buttons -->
<g>
<rect x="849.5" y="7.5" width="30" height="16" rx="2.5" fill="url(#bt)" stroke="#5f7390" stroke-width="1"/>
<rect x="850.5" y="8.5" width="28" height="14" rx="1.5" fill="none" stroke="#e4eef8" stroke-opacity="0.75" stroke-width="1"/>
<rect x="859.5" y="15.5" width="10" height="4" rx="1" fill="#f4f6f8" stroke="#4c5a70" stroke-width="1"/>
<rect x="882.5" y="7.5" width="30" height="16" rx="2.5" fill="url(#bt)" stroke="#5f7390" stroke-width="1"/>
<rect x="883.5" y="8.5" width="28" height="14" rx="1.5" fill="none" stroke="#e4eef8" stroke-opacity="0.75" stroke-width="1"/>
<rect x="892.5" y="11.5" width="10" height="8" rx="1" fill="#f4f6f8" stroke="#4c5a70" stroke-width="1"/>
<rect x="895.5" y="14.5" width="4" height="2" fill="#a9bdd6" stroke="#4c5a70" stroke-width="1"/>
<rect x="915.5" y="7.5" width="30" height="16" rx="2.5" fill="url(#bc)" stroke="#4e2028" stroke-width="1"/>
<rect x="916.5" y="8.5" width="28" height="14" rx="1.5" fill="none" stroke="#f4c8bc" stroke-opacity="0.7" stroke-width="1"/>
<path d="M926.4 11.8 L934.6 18.9 M934.6 11.8 L926.4 18.9" stroke="#5a343a" stroke-width="4.4" stroke-linecap="butt" fill="none"/>
<path d="M926.7 12.05 L934.3 18.65 M934.3 12.05 L926.7 18.65" stroke="#f8f8f8" stroke-width="2.7" stroke-linecap="butt" fill="none"/>
</g>
</svg>
</body></html>
